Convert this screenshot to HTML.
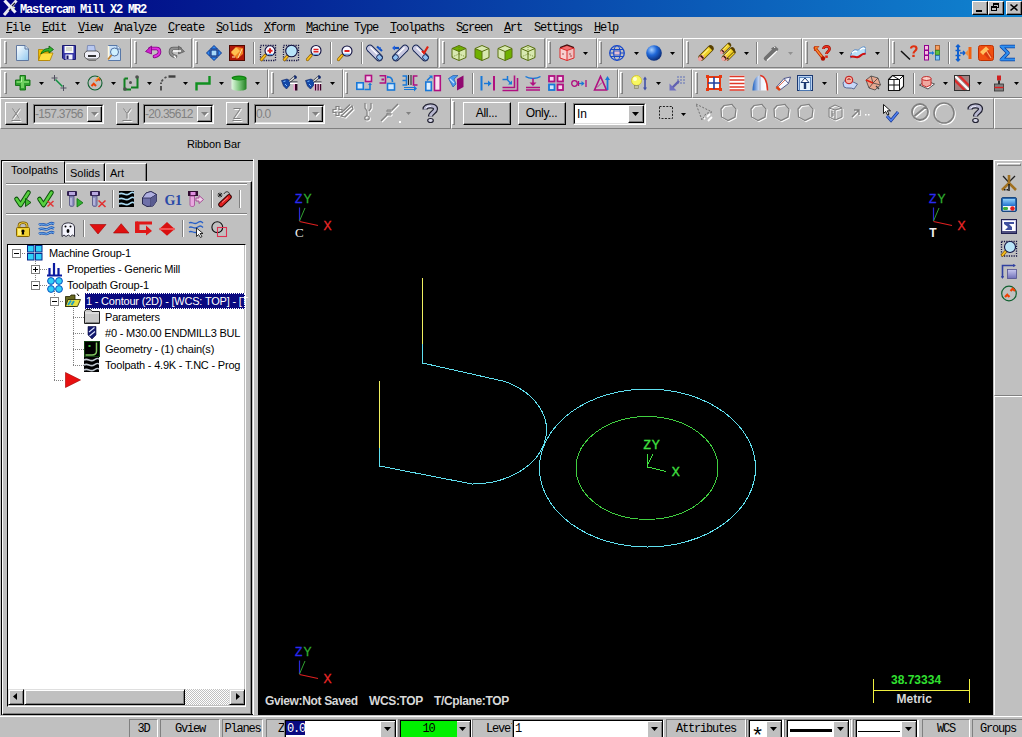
<!DOCTYPE html>
<html><head><meta charset="utf-8">
<style>
*{margin:0;padding:0;box-sizing:border-box}
html,body{width:1022px;height:737px;overflow:hidden;background:#c0c0c0;position:relative;font-family:"Liberation Sans",sans-serif;font-size:11px;color:#000}
.a{position:absolute;white-space:pre}
svg.a{overflow:visible}
.mono{font-family:"Liberation Mono",monospace;font-size:12px;letter-spacing:-1.2px;line-height:14px}
.u{text-decoration:underline}
</style></head><body>
<div class="a" style="left:0px;top:0px;width:1022px;height:17px;background:linear-gradient(90deg,#000080,#1084d0)"></div>
<svg class="a" style="left:2px;top:0px" width="17" height="16" viewBox="0 0 17 16"><path d="M2.5 0.5L13.5 12.5" stroke="#f0f0f8" stroke-width="3.2"/><path d="M14.5 0.5L2 15" stroke="#e8e8f0" stroke-width="3"/><path d="M13 3L10 6M9 9L7 11" stroke="#202030" stroke-width="1.2"/><path d="M11 7L13 8" stroke="#f0f0c0" stroke-width="1.5"/></svg>
<div class="a mono" style="left:20px;top:3px;color:#fff;font-weight:bold;">Mastercam Mill X2 MR2</div>
<div class="a" style="left:972px;top:1px;width:16px;height:14px;background:#c0c0c0;border-top:1px solid #fff;border-left:1px solid #fff;border-right:1px solid #000;border-bottom:1px solid #000;box-shadow:inset -1px -1px 0 #808080"></div>
<div class="a" style="left:976px;top:10px;width:6px;height:2px;background:#000"></div>
<div class="a" style="left:988px;top:1px;width:16px;height:14px;background:#c0c0c0;border-top:1px solid #fff;border-left:1px solid #fff;border-right:1px solid #000;border-bottom:1px solid #000;box-shadow:inset -1px -1px 0 #808080"></div>
<div class="a" style="left:993px;top:3px;width:6px;height:5px;border:1px solid #000;border-top-width:2px"></div>
<div class="a" style="left:991px;top:6px;width:6px;height:5px;border:1px solid #000;border-top-width:2px;background:#c0c0c0"></div>
<div class="a" style="left:1006px;top:1px;width:16px;height:14px;background:#c0c0c0;border-top:1px solid #fff;border-left:1px solid #fff;border-right:1px solid #000;border-bottom:1px solid #000;box-shadow:inset -1px -1px 0 #808080"></div>
<svg class="a" style="left:1010px;top:4px" width="8" height="7" viewBox="0 0 8 7"><path d="M0.5 0.5L7.5 6.5M7.5 0.5L0.5 6.5" stroke="#000" stroke-width="1.6"/></svg>
<div class="a mono" style="left:6px;top:21px;"><span class="u">F</span>ile</div>
<div class="a mono" style="left:42px;top:21px;"><span class="u">E</span>dit</div>
<div class="a mono" style="left:78px;top:21px;"><span class="u">V</span>iew</div>
<div class="a mono" style="left:114px;top:21px;"><span class="u">A</span>nalyze</div>
<div class="a mono" style="left:168px;top:21px;"><span class="u">C</span>reate</div>
<div class="a mono" style="left:216px;top:21px;"><span class="u">S</span>olids</div>
<div class="a mono" style="left:264px;top:21px;"><span class="u">X</span>form</div>
<div class="a mono" style="left:306px;top:21px;"><span class="u">M</span>achine Type</div>
<div class="a mono" style="left:390px;top:21px;"><span class="u">T</span>oolpaths</div>
<div class="a mono" style="left:456px;top:21px;">S<span class="u">c</span>reen</div>
<div class="a mono" style="left:504px;top:21px;"><span class="u">A</span>rt</div>
<div class="a mono" style="left:534px;top:21px;">Sett<span class="u">i</span>ngs</div>
<div class="a mono" style="left:594px;top:21px;"><span class="u">H</span>elp</div>
<div class="a" style="left:0px;top:38px;width:131px;height:30px;border-top:1px solid #fff;border-left:1px solid #fff;border-right:1px solid #808080;border-bottom:1px solid #808080"></div>
<div class="a" style="left:131px;top:38px;width:61px;height:30px;border-top:1px solid #fff;border-left:1px solid #fff;border-right:1px solid #808080;border-bottom:1px solid #808080"></div>
<div class="a" style="left:193px;top:38px;width:245px;height:30px;border-top:1px solid #fff;border-left:1px solid #fff;border-right:1px solid #808080;border-bottom:1px solid #808080"></div>
<div class="a" style="left:439px;top:38px;width:106px;height:30px;border-top:1px solid #fff;border-left:1px solid #fff;border-right:1px solid #808080;border-bottom:1px solid #808080"></div>
<div class="a" style="left:546px;top:38px;width:51px;height:30px;border-top:1px solid #fff;border-left:1px solid #fff;border-right:1px solid #808080;border-bottom:1px solid #808080"></div>
<div class="a" style="left:597px;top:38px;width:86px;height:30px;border-top:1px solid #fff;border-left:1px solid #fff;border-right:1px solid #808080;border-bottom:1px solid #808080"></div>
<div class="a" style="left:683px;top:38px;width:119px;height:30px;border-top:1px solid #fff;border-left:1px solid #fff;border-right:1px solid #808080;border-bottom:1px solid #808080"></div>
<div class="a" style="left:802px;top:38px;width:87px;height:30px;border-top:1px solid #fff;border-left:1px solid #fff;border-right:1px solid #808080;border-bottom:1px solid #808080"></div>
<div class="a" style="left:889px;top:38px;width:142px;height:30px;border-top:1px solid #fff;border-left:1px solid #fff;border-right:1px solid #808080;border-bottom:1px solid #808080"></div>
<div class="a" style="left:4px;top:41px;width:3px;height:23px;border-top:1px solid #fff;border-left:1px solid #fff;border-right:1px solid #808080;border-bottom:1px solid #808080"></div>
<div class="a" style="left:134px;top:41px;width:3px;height:23px;border-top:1px solid #fff;border-left:1px solid #fff;border-right:1px solid #808080;border-bottom:1px solid #808080"></div>
<div class="a" style="left:195px;top:41px;width:3px;height:23px;border-top:1px solid #fff;border-left:1px solid #fff;border-right:1px solid #808080;border-bottom:1px solid #808080"></div>
<div class="a" style="left:442px;top:41px;width:3px;height:23px;border-top:1px solid #fff;border-left:1px solid #fff;border-right:1px solid #808080;border-bottom:1px solid #808080"></div>
<div class="a" style="left:548px;top:41px;width:3px;height:23px;border-top:1px solid #fff;border-left:1px solid #fff;border-right:1px solid #808080;border-bottom:1px solid #808080"></div>
<div class="a" style="left:599px;top:41px;width:3px;height:23px;border-top:1px solid #fff;border-left:1px solid #fff;border-right:1px solid #808080;border-bottom:1px solid #808080"></div>
<div class="a" style="left:686px;top:41px;width:3px;height:23px;border-top:1px solid #fff;border-left:1px solid #fff;border-right:1px solid #808080;border-bottom:1px solid #808080"></div>
<div class="a" style="left:805px;top:41px;width:3px;height:23px;border-top:1px solid #fff;border-left:1px solid #fff;border-right:1px solid #808080;border-bottom:1px solid #808080"></div>
<div class="a" style="left:892px;top:41px;width:3px;height:23px;border-top:1px solid #fff;border-left:1px solid #fff;border-right:1px solid #808080;border-bottom:1px solid #808080"></div>
<svg class="a" style="left:14px;top:45px" width="16" height="16" viewBox="0 0 16 16"><defs><linearGradient id="gnew" x1="0" y1="0" x2="1" y2="1"><stop offset="0" stop-color="#ffffff"/><stop offset="1" stop-color="#90c8f0"/></linearGradient></defs><path d="M2.5 0.5H11L14.5 4V15.5H2.5Z" fill="url(#gnew)" stroke="#6078a0"/><path d="M11 0.5V4H14.5" fill="#d0e0f0" stroke="#6078a0"/></svg>
<svg class="a" style="left:38px;top:45px" width="16" height="16" viewBox="0 0 16 16"><path d="M0.5 4.5H5L6 5.5H12V8L10 15.5H0.5Z" fill="#f0c000" stroke="#b08000" stroke-width=".8"/><path d="M0.5 15.5L3 8H15L12 15.5Z" fill="#ffe040" stroke="#b08000" stroke-width=".8"/><path d="M3 9C4 5 7 3.5 11 3.5V1L15.5 4.5L11 8V6C8 6 5.5 7 3 9Z" fill="#30b030" stroke="#0a600a" stroke-width=".8"/></svg>
<svg class="a" style="left:61px;top:45px" width="16" height="16" viewBox="0 0 16 16"><path d="M1.5 0.5H14.5V14.5H3L1.5 13Z" fill="#3838a8" stroke="#1a1a70"/><rect x="3.5" y="1" width="9" height="7" fill="#fafafa"/><path d="M5 3H11M5 5H11" stroke="#a0a890" stroke-width=".8"/><rect x="4.5" y="9.5" width="7" height="5" fill="#f0f0ff"/><rect x="5.5" y="10.5" width="2" height="3.5" fill="#101060"/></svg>
<svg class="a" style="left:84px;top:45px" width="16" height="16" viewBox="0 0 16 16"><path d="M3.5 0.5H10.5L11.5 7H3Z" fill="#b8c8f0" stroke="#7080b0" stroke-width=".8"/><path d="M0.5 8L3 6H13L15.5 8V12L13 14H3L0.5 12Z" fill="#f0f0f8" stroke="#404040" stroke-width=".8"/><path d="M4 11H12" stroke="#000" stroke-width="1.6"/><path d="M3 14L5 15.5H12" stroke="#606060" stroke-width=".8" fill="none"/></svg>
<svg class="a" style="left:107px;top:45px" width="16" height="16" viewBox="0 0 16 16"><path d="M1.5 0.5H10L13.5 4V15.5H1.5Z" fill="#c8e0f8" stroke="#5878a8"/><path d="M10 0.5V4H13.5" fill="#e0f0ff" stroke="#5878a8"/><path d="M1.5 1V15" stroke="#fff8e0" stroke-width="1.5"/><circle cx="7.5" cy="7" r="4" fill="#d0f0ff" stroke="#5070a0"/><path d="M4.5 10L1 14.5" stroke="#c08030" stroke-width="1.8"/></svg>
<svg class="a" style="left:145px;top:45px" width="16" height="16" viewBox="0 0 16 16"><path d="M5 3.5H11.5C13.5 3.5 14.5 5 14.5 7C14.5 9 13 10.5 9.5 11.5" fill="none" stroke="#800080" stroke-width="3.6" stroke-linecap="round"/><path d="M5 3.5H11.5C13.5 3.5 14.5 5 14.5 7C14.5 9 13 10.5 9.5 11.5" fill="none" stroke="#e030e0" stroke-width="2" stroke-linecap="round"/><path d="M0.5 6.5L6.5 1V9Z" fill="#d020d0" stroke="#800080" stroke-width=".8"/></svg>
<svg class="a" style="left:169px;top:45px" width="16" height="16" viewBox="0 0 16 16"><g transform="translate(16 0) scale(-1 1)"><path d="M5 3.5H11.5C13.5 3.5 14.5 5 14.5 7C14.5 9 13 10.5 9.5 11.5" fill="none" stroke="#606060" stroke-width="3.6" stroke-linecap="round"/><path d="M5 3.5H11.5C13.5 3.5 14.5 5 14.5 7C14.5 9 13 10.5 9.5 11.5" fill="none" stroke="#909090" stroke-width="2" stroke-linecap="round"/><path d="M0.5 6.5L6.5 1V9Z" fill="#808080" stroke="#606060" stroke-width=".8"/></g><path d="M4 6H12M5 11L7 13" stroke="#fff" stroke-width="1.3"/></svg>
<svg class="a" style="left:206px;top:45px" width="16" height="16" viewBox="0 0 16 16"><path d="M8 0.5L11.5 4H4.5Z M8 15.5L11.5 12H4.5Z M0.5 8L4 4.5V11.5Z M15.5 8L12 4.5V11.5Z" fill="#3088f0" stroke="#0a3890" stroke-width="1" stroke-linejoin="round"/><rect x="5" y="5" width="6" height="6" fill="#a8d8f8" stroke="#0a3890" stroke-width="1.2"/></svg>
<svg class="a" style="left:229px;top:45px" width="16" height="16" viewBox="0 0 16 16"><rect x="0.5" y="0.5" width="15" height="15" fill="#b01808" stroke="#500800"/><path d="M2 8L8 2L14 3L14 9L8 14Z" fill="#f08020"/><path d="M2 7L7 2L11 6L6 11Z" fill="#ffc050"/><path d="M9 13L13 4" stroke="#ffe0a0" stroke-width="1"/><path d="M3 12H6" stroke="#ffd0a0" stroke-width="1.2"/></svg>
<svg class="a" style="left:260px;top:45px" width="16" height="16" viewBox="0 0 16 16"><rect x="0.5" y="0.5" width="15" height="15" fill="none" stroke="#101040" stroke-width="1.3" stroke-dasharray="1.2 1.2"/><path d="M5 10.5L1.5 14.5" stroke="#906000" stroke-width="3.2" stroke-linecap="round"/><path d="M5 10.5L1.5 14.5" stroke="#f8c020" stroke-width="1.8" stroke-linecap="round"/><circle cx="10" cy="5.8" r="5" fill="#f8f8ff" stroke="#101040" stroke-width="1.1"/><path d="M7.5 5.8H12.5M10 3.3V8.3" stroke="#e02020" stroke-width="2"/><path d="M7 9.5H13" stroke="#60a0e0" stroke-width="1.2"/></svg>
<svg class="a" style="left:283px;top:45px" width="16" height="16" viewBox="0 0 16 16"><rect x="0.5" y="0.5" width="15" height="15" fill="none" stroke="#101040" stroke-width="1.3" stroke-dasharray="1.2 1.2"/><path d="M5 10.5L1.5 14.5" stroke="#906000" stroke-width="3.2" stroke-linecap="round"/><path d="M5 10.5L1.5 14.5" stroke="#f8c020" stroke-width="1.8" stroke-linecap="round"/><circle cx="8.5" cy="6" r="5.8" fill="#b8e4f8" stroke="#101040" stroke-width="1.1"/></svg>
<svg class="a" style="left:306px;top:45px" width="16" height="16" viewBox="0 0 16 16"><path d="M5 10.5L1.5 14.5" stroke="#906000" stroke-width="3.2" stroke-linecap="round"/><path d="M5 10.5L1.5 14.5" stroke="#f8c020" stroke-width="1.8" stroke-linecap="round"/><circle cx="10" cy="5.5" r="5" fill="#f8f8ff" stroke="#101040" stroke-width="1.1"/><path d="M7.5 4.5H12.5M7.5 6.8H12.5" stroke="#e02020" stroke-width="1.4"/><path d="M7 9.3H13" stroke="#60a0e0" stroke-width="1.2"/></svg>
<svg class="a" style="left:337px;top:45px" width="16" height="16" viewBox="0 0 16 16"><path d="M5 10.5L1.5 14.5" stroke="#906000" stroke-width="3.2" stroke-linecap="round"/><path d="M5 10.5L1.5 14.5" stroke="#f8c020" stroke-width="1.8" stroke-linecap="round"/><circle cx="10" cy="6" r="5" fill="#f8f8ff" stroke="#101040" stroke-width="1.1"/><path d="M7.5 6H12.5" stroke="#e02020" stroke-width="2"/><path d="M7 9.3H13" stroke="#60a0e0" stroke-width="1.2"/></svg>
<svg class="a" style="left:368px;top:45px" width="16" height="16" viewBox="0 0 16 16"><path d="M2 3.5L11 12.5" stroke="#102050" stroke-width="7.5" stroke-linecap="round"/><path d="M2 3.5L11 12.5" stroke="#c8c8e0" stroke-width="5.8" stroke-linecap="round"/><path d="M2.5 2.5L9 9" stroke="#ffffff" stroke-width="1.2"/><ellipse cx="11.5" cy="12.5" rx="3" ry="2.6" transform="rotate(45 11.5 12.5)" fill="#90c0f0" stroke="#102050" stroke-width=".9"/><path d="M9 1.5L14 6" stroke="#1050c0" stroke-width="2.2"/><path d="M10 3L13 2L12 5Z" fill="#2060e0"/></svg>
<svg class="a" style="left:391px;top:45px" width="16" height="16" viewBox="0 0 16 16"><g transform="translate(16 0) scale(-1 1)"><path d="M2 3.5L11 12.5" stroke="#102050" stroke-width="7.5" stroke-linecap="round"/><path d="M2 3.5L11 12.5" stroke="#c8c8e0" stroke-width="5.8" stroke-linecap="round"/><path d="M2.5 2.5L9 9" stroke="#ffffff" stroke-width="1.2"/><ellipse cx="11.5" cy="12.5" rx="3" ry="2.6" transform="rotate(45 11.5 12.5)" fill="#90c0f0" stroke="#102050" stroke-width=".9"/></g><path d="M2 3H8" stroke="#1050c0" stroke-width="2.2"/><path d="M1 3L4 0.5V5.5Z" fill="#2060e0"/></svg>
<svg class="a" style="left:414px;top:45px" width="16" height="16" viewBox="0 0 16 16"><path d="M2 3.5L11 12.5" stroke="#102050" stroke-width="7.5" stroke-linecap="round"/><path d="M2 3.5L11 12.5" stroke="#c8c8e0" stroke-width="5.8" stroke-linecap="round"/><path d="M2.5 2.5L9 9" stroke="#ffffff" stroke-width="1.2"/><ellipse cx="11.5" cy="12.5" rx="3" ry="2.6" transform="rotate(45 11.5 12.5)" fill="#90c0f0" stroke="#102050" stroke-width=".9"/><path d="M8 6L10 8L14 1.5" stroke="#e02010" stroke-width="2.2" fill="none"/></svg>
<svg class="a" style="left:451px;top:45px" width="16" height="16" viewBox="0 0 16 16"><path d="M1 3.5L8 0.5L15 3.5L8 6.5Z" fill="#70b000"/><path d="M1 3.5L8 6.5V15.5L1 12.5Z" fill="#d8e8b0"/><path d="M15 3.5L8 6.5V15.5L15 12.5Z" fill="#d8e8b0"/><path d="M1 12L8 9L15 12M8 9V0.5" fill="none" stroke="#587010" stroke-width=".7" stroke-dasharray="1 1"/><path d="M1 3.5L8 0.5L15 3.5V12.5L8 15.5L1 12.5Z" fill="none" stroke="#587010" stroke-width="1"/><path d="M1 3.5L8 6.5L15 3.5M8 6.5V15.5" fill="none" stroke="#587010" stroke-width="1"/></svg>
<svg class="a" style="left:474px;top:45px" width="16" height="16" viewBox="0 0 16 16"><path d="M1 3.5L8 0.5L15 3.5L8 6.5Z" fill="#d8e8b0"/><path d="M1 3.5L8 6.5V15.5L1 12.5Z" fill="#70b000"/><path d="M15 3.5L8 6.5V15.5L15 12.5Z" fill="#d8e8b0"/><path d="M1 3.5L8 0.5L15 3.5V12.5L8 15.5L1 12.5Z" fill="none" stroke="#587010" stroke-width="1"/><path d="M1 3.5L8 6.5L15 3.5M8 6.5V15.5" fill="none" stroke="#587010" stroke-width="1"/></svg>
<svg class="a" style="left:497px;top:45px" width="16" height="16" viewBox="0 0 16 16"><path d="M1 3.5L8 0.5L15 3.5L8 6.5Z" fill="#d8e8b0"/><path d="M1 3.5L8 6.5V15.5L1 12.5Z" fill="#d8e8b0"/><path d="M15 3.5L8 6.5V15.5L15 12.5Z" fill="#70b000"/><path d="M1 3.5L8 0.5L15 3.5V12.5L8 15.5L1 12.5Z" fill="none" stroke="#587010" stroke-width="1"/><path d="M1 3.5L8 6.5L15 3.5M8 6.5V15.5" fill="none" stroke="#587010" stroke-width="1"/></svg>
<svg class="a" style="left:520px;top:45px" width="16" height="16" viewBox="0 0 16 16"><path d="M1 3.5L8 0.5L15 3.5L8 6.5Z" fill="#d8e8b0"/><path d="M1 3.5L8 6.5V15.5L1 12.5Z" fill="#d8e8b0"/><path d="M15 3.5L8 6.5V15.5L15 12.5Z" fill="#d8e8b0"/><path d="M1 12L8 9L15 12M8 9V0.5" fill="none" stroke="#587010" stroke-width=".7" stroke-dasharray="1 1"/><path d="M1 3.5L8 0.5L15 3.5V12.5L8 15.5L1 12.5Z" fill="none" stroke="#587010" stroke-width="1"/><path d="M1 3.5L8 6.5L15 3.5M8 6.5V15.5" fill="none" stroke="#587010" stroke-width="1"/></svg>
<svg class="a" style="left:559px;top:45px" width="16" height="16" viewBox="0 0 16 16"><path d="M1 3L8 0.5L15 3L8 5.5Z" fill="#f07070"/><path d="M1 3L8 5.5V15.5L1 13Z" fill="#f8d0d0"/><path d="M15 3L8 5.5V15.5L15 13Z" fill="#f0c0c0"/><path d="M1 3L8 0.5L15 3V13L8 15.5L1 13ZM1 3L8 5.5L15 3M8 5.5V15.5" fill="none" stroke="#e02828" stroke-width="1"/><path d="M1 2.5L8 0L15 2.5" stroke="#401010" stroke-width="1.2" fill="none"/><circle cx="4" cy="9" r=".7" fill="#802020"/><circle cx="11" cy="9" r=".7" fill="#802020"/><circle cx="12" cy="11" r=".7" fill="#802020"/></svg>
<svg class="a" style="left:609px;top:45px" width="16" height="16" viewBox="0 0 16 16"><circle cx="8" cy="8" r="7.3" fill="none" stroke="#1848c8" stroke-width="1.3"/><ellipse cx="8" cy="8" rx="3.3" ry="7.3" fill="none" stroke="#1848c8"/><path d="M1 8H15M2 4.5H14M2 11.5H14" stroke="#1848c8"/><rect x="5" y="6" width="6" height="4" fill="#e8c0d0" stroke="#1848c8" stroke-width=".8"/></svg>
<svg class="a" style="left:646px;top:45px" width="16" height="16" viewBox="0 0 16 16"><defs><radialGradient id="sg" cx=".35" cy=".3" r=".75"><stop offset="0" stop-color="#a8d0ff"/><stop offset=".45" stop-color="#2068d8"/><stop offset="1" stop-color="#0a2870"/></radialGradient></defs><circle cx="8" cy="8" r="7.8" fill="url(#sg)"/></svg>
<svg class="a" style="left:698px;top:45px" width="16" height="16" viewBox="0 0 16 16"><path d="M3.5 12.5L12.5 3.5" stroke="#584000" stroke-width="6.4" stroke-linecap="round"/><path d="M3.5 12.5L12.5 3.5" stroke="#f0d028" stroke-width="4.8"/><path d="M4 10.5L10.5 4" stroke="#fff080" stroke-width="1.2"/><path d="M2 14L4 12" stroke="#f0a0a0" stroke-width="4.4" stroke-linecap="round"/><path d="M2.5 10.5L5.5 13.5" stroke="#301000" stroke-width="1.6"/></svg>
<svg class="a" style="left:720px;top:45px" width="16" height="16" viewBox="0 0 16 16"><g transform="translate(0 -2.5) scale(.72)"><path d="M3.5 12.5L12.5 3.5" stroke="#584000" stroke-width="6.4" stroke-linecap="round"/><path d="M3.5 12.5L12.5 3.5" stroke="#f0d028" stroke-width="4.8"/><path d="M4 10.5L10.5 4" stroke="#fff080" stroke-width="1.2"/><path d="M2 14L4 12" stroke="#f0a0a0" stroke-width="4.4" stroke-linecap="round"/><path d="M2.5 10.5L5.5 13.5" stroke="#301000" stroke-width="1.6"/></g><g transform="translate(4.5 4.5) scale(.72)"><path d="M3.5 12.5L12.5 3.5" stroke="#584000" stroke-width="6.4" stroke-linecap="round"/><path d="M3.5 12.5L12.5 3.5" stroke="#f0d028" stroke-width="4.8"/><path d="M4 10.5L10.5 4" stroke="#fff080" stroke-width="1.2"/><path d="M2 14L4 12" stroke="#f0a0a0" stroke-width="4.4" stroke-linecap="round"/><path d="M2.5 10.5L5.5 13.5" stroke="#301000" stroke-width="1.6"/></g><g transform="translate(1.5 2) scale(.85)"><path d="M3.5 12.5L12.5 3.5" stroke="#584000" stroke-width="6.4" stroke-linecap="round"/><path d="M3.5 12.5L12.5 3.5" stroke="#f0d028" stroke-width="4.8"/><path d="M4 10.5L10.5 4" stroke="#fff080" stroke-width="1.2"/><path d="M2 14L4 12" stroke="#f0a0a0" stroke-width="4.4" stroke-linecap="round"/><path d="M2.5 10.5L5.5 13.5" stroke="#301000" stroke-width="1.6"/></g></svg>
<svg class="a" style="left:763px;top:45px" width="16" height="16" viewBox="0 0 16 16"><path d="M3 13.5L10 6.5" stroke="#707070" stroke-width="4.5" stroke-linecap="round"/><path d="M8 3.5L12 1L15.5 4L13 8Z" fill="#707070"/><path d="M11 1.5L12 3" stroke="#fff" stroke-width="1"/><path d="M4 15.5L14 6" stroke="#fff" stroke-width="1.2"/></svg>
<svg class="a" style="left:814px;top:45px" width="16" height="16" viewBox="0 0 16 16"><path d="M1 3L8.5 12.5" stroke="#c02000" stroke-width="3" stroke-linecap="round"/><path d="M1.5 3.5L8.5 12.5" stroke="#f89030" stroke-width="1.4"/><path d="M0.5 1.5H5L0.5 6Z" fill="#f08020" stroke="#c02000" stroke-width=".6"/><circle cx="9" cy="13.5" r="2.2" fill="#b01000"/><path d="M9.5 4C9.5 0.5 15.5 0.5 15.5 4C15.5 6.5 12.5 6.5 12.5 9" fill="none" stroke="#a01000" stroke-width="2.8"/><path d="M9.5 4C9.5 0.5 15.5 0.5 15.5 4C15.5 6.5 12.5 6.5 12.5 9" fill="none" stroke="#f03020" stroke-width="1.4"/><rect x="11.2" y="10.5" width="2.6" height="2.4" fill="#e02010"/></svg>
<svg class="a" style="left:850px;top:45px" width="16" height="16" viewBox="0 0 16 16"><path d="M0.5 11C2 6 4 4 7 5C9 6 11 1 15 2L15.5 9C13 8 11 11 9 12C6 13 4 10 0.5 13Z" fill="#b8e0f8" stroke="#3070c0" stroke-width=".7"/><path d="M2 8C4 6 6 6 7 7M10 5C12 3 14 3 15 4" stroke="#ffffff" stroke-width="1.2" fill="none"/><path d="M0.5 12C3 10 5 13 8 12C11 11 12 8 15.5 9" stroke="#d01010" stroke-width="2" fill="none"/></svg>
<svg class="a" style="left:902px;top:45px" width="16" height="16" viewBox="0 0 16 16"><path d="M-1 6L8 14.5" stroke="#101010" stroke-width="1.5"/><path d="M9 3.5C9 0.5 14.5 0.5 14.5 3.5C14.5 6 11.5 6 11.5 8.5" fill="none" stroke="#e03010" stroke-width="2.2"/><rect x="10.3" y="9.8" width="2.4" height="2.2" fill="#e03010"/></svg>
<svg class="a" style="left:924px;top:45px" width="16" height="16" viewBox="0 0 16 16"><rect x="0.5" y="0.5" width="4" height="4.5" fill="#f8c0e0" stroke="#900090"/><rect x="0.5" y="5.5" width="4" height="4.5" fill="#f8c0e0" stroke="#900090"/><rect x="0.5" y="10.5" width="4" height="4.5" fill="#f8c0e0" stroke="#900090"/><path d="M5 8H9" stroke="#1878e0" stroke-width="1.5"/><path d="M8 6L10.5 8L8 10Z" fill="#1878e0"/><rect x="11.5" y="0.5" width="4" height="4.5" fill="#f8a060" stroke="#a05020" stroke-width=".8"/><rect x="11.5" y="5.5" width="4" height="4.5" fill="#60c040" stroke="#308020" stroke-width=".8"/><rect x="11.5" y="10.5" width="4" height="4.5" fill="#80c8f8" stroke="#2060a0" stroke-width=".8"/></svg>
<svg class="a" style="left:955px;top:45px" width="16" height="16" viewBox="0 0 16 16"><path d="M3 1V15" stroke="#1060d0" stroke-width="2"/><path d="M1 2L3 0L5 2M1 14L3 16L5 14M0.5 5.5H5.5M0.5 10.5H5.5" stroke="#1060d0" stroke-width="1.5" fill="none"/><path d="M5 8H10M8 6L10 8L8 10" stroke="#1060d0" stroke-width="1.4" fill="none"/><path d="M15 2V14" stroke="#f06010" stroke-width="3"/><path d="M10 8L14 4V12Z" fill="#f09040"/></svg>
<svg class="a" style="left:978px;top:45px" width="16" height="16" viewBox="0 0 16 16"><rect x="0.5" y="0.5" width="15" height="15" rx="2" fill="#f05010" stroke="#c03000"/><path d="M2 7L8 1.5L11 4.5L5 10Z" fill="#ffc060"/><path d="M6 9L10 5L14.5 12L11 14.5Z" fill="#d83810"/><path d="M8.5 6L13 13" stroke="#ffb070" stroke-width="1.2"/></svg>
<svg class="a" style="left:1000px;top:45px" width="16" height="16" viewBox="0 0 16 16"><path d="M15 1.5H1.5L8 8L1.5 14.5H15" fill="none" stroke="#0a40a0" stroke-width="3.6" stroke-linejoin="round"/><path d="M15 1.5H1.5L8 8L1.5 14.5H15" fill="none" stroke="#3090f0" stroke-width="2"/></svg>
<div class="a" style="left:253px;top:42px;width:1px;height:22px;background:#808080"></div>
<div class="a" style="left:254px;top:42px;width:1px;height:22px;background:#fff"></div>
<div class="a" style="left:330px;top:42px;width:1px;height:22px;background:#808080"></div>
<div class="a" style="left:331px;top:42px;width:1px;height:22px;background:#fff"></div>
<div class="a" style="left:361px;top:42px;width:1px;height:22px;background:#808080"></div>
<div class="a" style="left:362px;top:42px;width:1px;height:22px;background:#fff"></div>
<div class="a" style="left:756px;top:42px;width:1px;height:22px;background:#808080"></div>
<div class="a" style="left:757px;top:42px;width:1px;height:22px;background:#fff"></div>
<div class="a" style="left:948px;top:42px;width:1px;height:22px;background:#808080"></div>
<div class="a" style="left:949px;top:42px;width:1px;height:22px;background:#fff"></div>
<svg class="a" style="left:583px;top:52px" width="5" height="3"><path d="M0 0H5L2.5 3Z" fill="#000"/></svg>
<svg class="a" style="left:634px;top:52px" width="5" height="3"><path d="M0 0H5L2.5 3Z" fill="#000"/></svg>
<svg class="a" style="left:670px;top:52px" width="5" height="3"><path d="M0 0H5L2.5 3Z" fill="#000"/></svg>
<svg class="a" style="left:744px;top:52px" width="5" height="3"><path d="M0 0H5L2.5 3Z" fill="#000"/></svg>
<svg class="a" style="left:839px;top:52px" width="5" height="3"><path d="M0 0H5L2.5 3Z" fill="#000"/></svg>
<svg class="a" style="left:875px;top:52px" width="5" height="3"><path d="M0 0H5L2.5 3Z" fill="#000"/></svg>
<svg class="a" style="left:788px;top:52px" width="5" height="3"><path d="M0 0H5L2.5 3Z" fill="#909090"/></svg>
<div class="a" style="left:0px;top:69px;width:268px;height:29px;border-top:1px solid #fff;border-left:1px solid #fff;border-right:1px solid #808080;border-bottom:1px solid #808080"></div>
<div class="a" style="left:268px;top:69px;width:75px;height:29px;border-top:1px solid #fff;border-left:1px solid #fff;border-right:1px solid #808080;border-bottom:1px solid #808080"></div>
<div class="a" style="left:343px;top:69px;width:275px;height:29px;border-top:1px solid #fff;border-left:1px solid #fff;border-right:1px solid #808080;border-bottom:1px solid #808080"></div>
<div class="a" style="left:618px;top:69px;width:74px;height:29px;border-top:1px solid #fff;border-left:1px solid #fff;border-right:1px solid #808080;border-bottom:1px solid #808080"></div>
<div class="a" style="left:692px;top:69px;width:339px;height:29px;border-top:1px solid #fff;border-left:1px solid #fff;border-right:1px solid #808080;border-bottom:1px solid #808080"></div>
<div class="a" style="left:4px;top:72px;width:3px;height:22px;border-top:1px solid #fff;border-left:1px solid #fff;border-right:1px solid #808080;border-bottom:1px solid #808080"></div>
<div class="a" style="left:271px;top:72px;width:3px;height:22px;border-top:1px solid #fff;border-left:1px solid #fff;border-right:1px solid #808080;border-bottom:1px solid #808080"></div>
<div class="a" style="left:345px;top:72px;width:3px;height:22px;border-top:1px solid #fff;border-left:1px solid #fff;border-right:1px solid #808080;border-bottom:1px solid #808080"></div>
<div class="a" style="left:620px;top:72px;width:3px;height:22px;border-top:1px solid #fff;border-left:1px solid #fff;border-right:1px solid #808080;border-bottom:1px solid #808080"></div>
<div class="a" style="left:695px;top:72px;width:3px;height:22px;border-top:1px solid #fff;border-left:1px solid #fff;border-right:1px solid #808080;border-bottom:1px solid #808080"></div>
<svg class="a" style="left:15px;top:75px" width="16" height="16" viewBox="0 0 16 16"><path d="M5 0.5H10.5V5H15V10.5H10.5V15H5V10.5H0.5V5H5Z" fill="#30a030" stroke="#107010" stroke-width=".9"/><path d="M6 1.5H9V6H14V8H9V13H6V8H1.5V6H6Z" fill="#70d060"/><path d="M6.5 2V7" stroke="#b0f0a0" stroke-width="1"/></svg>
<svg class="a" style="left:51px;top:75px" width="16" height="16" viewBox="0 0 16 16"><path d="M0.5 3H6.5M3.5 0V6M9.5 13H15.5M12.5 10V16" stroke="#505060" stroke-width="1"/><path d="M4.5 4.5L11.5 11.5" stroke="#109040" stroke-width="1.5"/></svg>
<svg class="a" style="left:87px;top:75px" width="16" height="16" viewBox="0 0 16 16"><circle cx="8" cy="8" r="7" fill="none" stroke="#106030" stroke-width="1.1"/><path d="M4.5 11L7 8.5M6 8L9 11M9 6L11.5 3.5M10.5 3L13 5.5" stroke="#f04000" stroke-width="2"/><path d="M8 6L12 2" stroke="#f8a030" stroke-width="1.2"/></svg>
<svg class="a" style="left:123px;top:75px" width="16" height="16" viewBox="0 0 16 16"><path d="M1.5 3.5V14.5H8M14.5 1.5V12.5H8" fill="none" stroke="#108020" stroke-width="2"/><path d="M1.5 3.5H5" stroke="#108020" stroke-width="2"/><circle cx="7.5" cy="7.5" r="1.5" fill="#505050"/><circle cx="2" cy="14" r="1.8" fill="#505050"/><circle cx="14" cy="2" r="1.8" fill="#505050"/></svg>
<svg class="a" style="left:159px;top:75px" width="16" height="16" viewBox="0 0 16 16"><path d="M2 15.5V11M2 9V7.5" stroke="#505050" stroke-width="2"/><path d="M2.5 6.5L4 4.5M5.5 3L7.5 2" stroke="#505050" stroke-width="1.8"/><path d="M9.5 1.5H16.5" stroke="#404040" stroke-width="2.4"/></svg>
<svg class="a" style="left:195px;top:75px" width="16" height="16" viewBox="0 0 16 16"><path d="M1.5 15.5V8.5H14.5V1" fill="none" stroke="#109020" stroke-width="2.4"/></svg>
<svg class="a" style="left:231px;top:75px" width="16" height="16" viewBox="0 0 16 16"><defs><linearGradient id="gcyl" x1="0" x2="1"><stop offset="0" stop-color="#e0f8e0"/><stop offset=".5" stop-color="#80c880"/><stop offset="1" stop-color="#208020"/></linearGradient></defs><path d="M0.5 3V13.5C0.5 16.5 15.5 16.5 15.5 13.5V3Z" fill="url(#gcyl)"/><ellipse cx="8" cy="3" rx="7.5" ry="2.6" fill="#108010"/><ellipse cx="8" cy="3.3" rx="6" ry="1.6" fill="#20a020"/></svg>
<svg class="a" style="left:281px;top:75px" width="16" height="16" viewBox="0 0 16 16"><path d="M0.5 5.5L6 4L9.5 6L8.5 10.5L5.5 14L2.5 11Z" fill="#1448a8" stroke="#0a2060" stroke-width=".6"/><path d="M2.5 6.5L4.5 6M4 9L6 11" stroke="#80c0ff" stroke-width="1"/><path d="M8.5 6.5L15 1" stroke="#303840" stroke-width="2.6"/><path d="M8.5 6.5L15 1" stroke="#f0f0f0" stroke-width="1.2"/><path d="M13 0.5C15 0 16.5 1.5 15.5 3.5L13.5 4" fill="#102870"/><path d="M9 7H16.5" stroke="#202030" stroke-width="1"/><path d="M9 8.3H16.5" stroke="#fff" stroke-width="1.4"/><rect x="14" y="9" width="2.4" height="6.5" fill="#300020"/><rect x="12.5" y="9" width="1.5" height="6.5" fill="#f0a0d0"/></svg>
<svg class="a" style="left:305px;top:75px" width="16" height="16" viewBox="0 0 16 16"><path d="M0.5 5.5L6 4L9.5 6L8.5 10.5L5.5 14L2.5 11Z" fill="#1448a8" stroke="#0a2060" stroke-width=".6"/><path d="M2.5 6.5L4.5 6M4 9L6 11" stroke="#80c0ff" stroke-width="1"/><path d="M8.5 6.5L15 1" stroke="#303840" stroke-width="2.6"/><path d="M8.5 6.5L15 1" stroke="#f0f0f0" stroke-width="1.2"/><path d="M13 0.5C15 0 16.5 1.5 15.5 3.5L13.5 4" fill="#102870"/><path d="M9 7H16.5" stroke="#202030" stroke-width="1"/><path d="M9 8.3H16.5" stroke="#fff" stroke-width="1.4"/><path d="M10.5 9V15.5M13 9V15.5M15.5 9V15.5" stroke="#400028" stroke-width="1.4"/><path d="M9.5 9V15.5M12 9V15.5M14.5 9V15.5" stroke="#f0a0d0" stroke-width=".8"/></svg>
<svg class="a" style="left:356px;top:75px" width="16" height="16" viewBox="0 0 16 16"><rect x="9.5" y="0.5" width="6" height="6" fill="#f8d0f0" stroke="#b01080" stroke-width="1.6"/><rect x="0.8" y="7.8" width="6.5" height="6.5" fill="#d0e8ff" stroke="#1878d8" stroke-width="1.6"/><path d="M8.5 14.5H14V9" fill="none" stroke="#1878d8" stroke-width="1.6"/><path d="M12 10L14 7.5L16 10Z" fill="#1878d8"/></svg>
<svg class="a" style="left:379px;top:75px" width="16" height="16" viewBox="0 0 16 16"><path d="M0.5 0.8H6.5V8H0.5" fill="none" stroke="#b01080" stroke-width="1.6"/><path d="M2.5 3.5H5V5.5H2.5Z" fill="#b01080"/><rect x="8.5" y="8.5" width="7" height="6.5" fill="#d0e8ff" stroke="#1878d8" stroke-width="1.6"/><path d="M9 2C12 2 13.5 4 13.5 7" stroke="#1878d8" stroke-width="1.6" fill="none"/><path d="M8 0.5L10 2L8 3.5Z" fill="#1878d8"/></svg>
<svg class="a" style="left:402px;top:75px" width="16" height="16" viewBox="0 0 16 16"><path d="M0.5 1H4.5V10H0.5M0.5 5.5H4.5" fill="none" stroke="#1878d8" stroke-width="1.6"/><path d="M15.5 1H11.5V10H15.5" fill="none" stroke="#b01080" stroke-width="1.6"/><path d="M6.5 0V10M9 0V10" stroke="#202020" stroke-width="1"/><path d="M2 12.5H13M2 14.5H13" stroke="#1878d8" stroke-width="1"/><path d="M12 10.5L15 13.5L12 16.5Z" fill="#1878d8"/></svg>
<svg class="a" style="left:425px;top:75px" width="16" height="16" viewBox="0 0 16 16"><rect x="0.8" y="7" width="5.5" height="8.5" fill="#e0f0ff" stroke="#1878d8" stroke-width="1.6"/><rect x="9.5" y="0.8" width="5.8" height="14.7" fill="#f8e0f0" stroke="#b01080" stroke-width="1.6"/><path d="M2 5.5L6 1.5" stroke="#1878d8" stroke-width="1.6"/><path d="M4 0.5H7.5V4Z" fill="#1878d8"/></svg>
<svg class="a" style="left:448px;top:75px" width="16" height="16" viewBox="0 0 16 16"><path d="M0.5 3.5L5 0.5H10L6 4L8 9L5 12Z" fill="#4898f0" stroke="#1050a0" stroke-width=".6"/><path d="M2 4L6 8" stroke="#c0e0ff" stroke-width="1.2"/><path d="M9 4L15.5 0.5V12L9 15.5Z" fill="#900870"/></svg>
<svg class="a" style="left:480px;top:75px" width="16" height="16" viewBox="0 0 16 16"><path d="M1.5 1V15.5" stroke="#1878d8" stroke-width="2"/><path d="M14 1V15.5" stroke="#b01080" stroke-width="2"/><path d="M4 8.5H10" stroke="#1878d8" stroke-width="1.4"/><path d="M8 5.5L11.5 8.5L8 11.5Z" fill="#1878d8"/></svg>
<svg class="a" style="left:502px;top:75px" width="16" height="16" viewBox="0 0 16 16"><path d="M0.5 12.5H12.5V0.5" fill="none" stroke="#b01080" stroke-width="1.6"/><path d="M0.5 15.5H15.5V3" fill="none" stroke="#b01080" stroke-width="1.6"/><path d="M5.5 5L9 8.5" stroke="#1878d8" stroke-width="1.5"/><path d="M6 9.5H10V5.5Z" fill="#1878d8"/><path d="M0.5 4.5H5.5V1" fill="none" stroke="#1878d8" stroke-width="1.5"/></svg>
<svg class="a" style="left:525px;top:75px" width="16" height="16" viewBox="0 0 16 16"><path d="M0.5 1.5C4 4 12 4 15.5 1.5" stroke="#1878d8" stroke-width="1.5" fill="none"/><path d="M8 3.5V8" stroke="#b01080" stroke-width="1.5"/><path d="M4.5 7.5H11.5L8 11Z" fill="#b01080"/><path d="M1 12.5H15M1 15H15" stroke="#b01080" stroke-width="1.5"/></svg>
<svg class="a" style="left:548px;top:75px" width="16" height="16" viewBox="0 0 16 16"><rect x="1" y="1" width="5.5" height="5.5" fill="#f8d8f0" stroke="#b01080" stroke-width="1.8"/><rect x="9.5" y="1" width="5.5" height="5.5" fill="#f8d8f0" stroke="#b01080" stroke-width="1.8"/><rect x="1" y="9.5" width="5.5" height="5.5" fill="#d0e8ff" stroke="#1878d8" stroke-width="1.8"/><rect x="9.5" y="9.5" width="5.5" height="5.5" fill="#f8d8f0" stroke="#b01080" stroke-width="1.8"/></svg>
<svg class="a" style="left:571px;top:75px" width="16" height="16" viewBox="0 0 16 16"><circle cx="3.5" cy="8.5" r="2.8" fill="none" stroke="#b01080" stroke-width="1.3"/><path d="M7 8.5H13" stroke="#1878d8" stroke-width="1.3"/><path d="M10.5 6L13.5 8.5L10.5 11Z" fill="#1878d8"/><path d="M15 5V12M7.5 6V11" stroke="#b01080" stroke-width="1.3"/></svg>
<svg class="a" style="left:594px;top:75px" width="16" height="16" viewBox="0 0 16 16"><path d="M0.5 15L6.5 1.5L12.5 15Z" fill="none" stroke="#b01080" stroke-width="1.6"/><path d="M3 12.5L8 7.5" stroke="#b01080" stroke-width=".8"/><path d="M13.5 15V4" stroke="#1878d8" stroke-width="1.8"/><path d="M11 5L13.5 1L16 5Z" fill="#1878d8"/></svg>
<svg class="a" style="left:631px;top:75px" width="16" height="16" viewBox="0 0 16 16"><circle cx="5.5" cy="5.5" r="5" fill="#f8f860" stroke="#d0c020" stroke-width=".8"/><circle cx="4" cy="4" r="2" fill="#ffffd0"/><rect x="3.5" y="10.5" width="4" height="3" fill="#c0c0a0" stroke="#808060" stroke-width=".6"/><path d="M14 3V14" stroke="#4050a8" stroke-width="1.6"/><path d="M12 4.5L14 1.5L16 4.5ZM12 12.5L14 15.5L16 12.5Z" fill="#4050a8"/></svg>
<svg class="a" style="left:669px;top:75px" width="16" height="16" viewBox="0 0 16 16"><path d="M8 2H16M8 5H16M8 8H16" stroke="#6070b8" stroke-width="1" stroke-dasharray="2 1"/><path d="M2 14L10 6" stroke="#6060b0" stroke-width="2.4"/><path d="M0.5 8.5V15.5H7.5Z" fill="#7070c0"/></svg>
<svg class="a" style="left:706px;top:75px" width="16" height="16" viewBox="0 0 16 16"><rect x="2" y="2" width="12" height="12" fill="#fff" stroke="#e83810" stroke-width="2"/><path d="M8 2V14M2 8H14" stroke="#2040a0" stroke-width="1.6"/><rect x="0" y="0" width="3" height="3" fill="#e83810"/><rect x="13" y="0" width="3" height="3" fill="#e83810"/><rect x="0" y="13" width="3" height="3" fill="#e83810"/><rect x="13" y="13" width="3" height="3" fill="#e83810"/></svg>
<svg class="a" style="left:729px;top:75px" width="16" height="16" viewBox="0 0 16 16"><rect x="0.5" y="0.5" width="15" height="15" fill="#fff"/><path d="M0.5 1.5H15.5M0.5 5H15.5M0.5 8.5H15.5M0.5 12H15.5M0.5 15H15.5" stroke="#e03828" stroke-width="1.6"/></svg>
<svg class="a" style="left:752px;top:75px" width="16" height="16" viewBox="0 0 16 16"><defs><linearGradient id="garch" x1="0" x2="1"><stop offset="0" stop-color="#2060c0"/><stop offset=".5" stop-color="#e8f0ff"/><stop offset="1" stop-color="#ffffff"/></linearGradient></defs><path d="M0.5 15.5C0.5 6 4 0.5 8 0.5C12 0.5 15.5 6 15.5 15.5Z" fill="url(#garch)"/><path d="M8 0.5C12 0.5 15.5 6 15.5 15.5" fill="none" stroke="#e03020" stroke-width="1.5"/><path d="M8 0.5V15.5" stroke="#a0a0b0" stroke-width="1"/></svg>
<svg class="a" style="left:775px;top:75px" width="16" height="16" viewBox="0 0 16 16"><path d="M1.5 12L9 3.5L15.5 2L13.5 8.5L5 15Z" fill="#f8f8ff" stroke="#404880" stroke-width=".9"/><path d="M1.5 12L5 15" stroke="#e04010" stroke-width="2.6"/><path d="M9 3.5L13.5 8.5" stroke="#404880" stroke-width=".9"/><path d="M3 12L10 5" stroke="#e07050" stroke-width="1"/></svg>
<svg class="a" style="left:797px;top:75px" width="16" height="16" viewBox="0 0 16 16"><rect x="0.5" y="0.5" width="15" height="15" fill="#b8d0f0" stroke="#1a3870"/><rect x="2.5" y="2.5" width="11" height="13" fill="#e8f4ff" stroke="#4070b0" stroke-width=".8"/><path d="M8 14V6" stroke="#1a3870" stroke-width="2.4"/><path d="M4 7.5L8 3L12 7.5Z" fill="#fff" stroke="#1a3870" stroke-width="1"/></svg>
<svg class="a" style="left:842px;top:75px" width="16" height="16" viewBox="0 0 16 16"><path d="M1 8C3 4 7 4 9 6L15.5 9L12 14C9 12 5 14 2 12Z" fill="#c8d8f8" stroke="#405080" stroke-width=".8"/><circle cx="7" cy="5" r="3.8" fill="#f8b0a0" stroke="#c01010" stroke-width="1"/><path d="M5.5 5L7 3.5L8.5 5" stroke="#800000" stroke-width="1" fill="none"/></svg>
<svg class="a" style="left:865px;top:75px" width="16" height="16" viewBox="0 0 16 16"><path d="M1 5L6 1L13 3L15.5 10L10 15L4 13Z" fill="#e8a890" stroke="#404040" stroke-width=".8"/><path d="M6 1L8 8L13 3M8 8L4 13M8 8L15.5 10" stroke="#404040" stroke-width=".8" fill="none"/><path d="M1 5L8 8" stroke="#e02010" stroke-width="1.6"/><path d="M11 11L14 14" stroke="#404040" stroke-width="1.2"/></svg>
<svg class="a" style="left:888px;top:75px" width="16" height="16" viewBox="0 0 16 16"><path d="M0.5 4.5L4.5 0.5H15.5V11.5L11.5 15.5H0.5Z" fill="#fff" stroke="#101010" stroke-width="1.1"/><path d="M0.5 4.5H11.5V15.5M11.5 4.5L15.5 0.5M6 4.5V15.5M0.5 10H11.5M4.5 0.5L11 4.5" stroke="#101010" fill="none" stroke-width="1"/></svg>
<svg class="a" style="left:919px;top:75px" width="16" height="16" viewBox="0 0 16 16"><path d="M0.5 10L7 6L15.5 9L9 14Z" fill="#ffffff" stroke="#303030" stroke-width=".8"/><path d="M3 3.5H12V10L7.5 12L3 10Z" fill="#f0a8a0" stroke="#c01818" stroke-width=".9"/><ellipse cx="7.5" cy="3.5" rx="4.5" ry="2" fill="#f8d0c8" stroke="#c01818" stroke-width=".9"/></svg>
<svg class="a" style="left:954px;top:75px" width="16" height="16" viewBox="0 0 16 16"><rect x="0.5" y="0.5" width="15" height="15" fill="#a08080" stroke="#303030"/><path d="M0.5 5L11 15.5M5 0.5L15.5 11" stroke="#e02828" stroke-width="2.2"/><path d="M1 1L15 15" stroke="#f8f8f8" stroke-width="2.4"/><rect x="0.5" y="0.5" width="15" height="15" fill="none" stroke="#303030" stroke-width="1"/></svg>
<svg class="a" style="left:993px;top:75px" width="16" height="16" viewBox="0 0 16 16"><rect x="4" y="0.5" width="4" height="5" fill="#d02020"/><path d="M6 5.5V9" stroke="#303030" stroke-width="2"/><rect x="1.5" y="9" width="9" height="7" fill="#808080" stroke="#303030" stroke-width=".8"/><path d="M1.5 12.5H10.5" stroke="#e02020" stroke-width="1.4"/></svg>
<div class="a" style="left:472px;top:73px;width:1px;height:21px;background:#808080"></div>
<div class="a" style="left:473px;top:73px;width:1px;height:21px;background:#fff"></div>
<div class="a" style="left:836px;top:73px;width:1px;height:21px;background:#808080"></div>
<div class="a" style="left:837px;top:73px;width:1px;height:21px;background:#fff"></div>
<div class="a" style="left:913px;top:73px;width:1px;height:21px;background:#808080"></div>
<div class="a" style="left:914px;top:73px;width:1px;height:21px;background:#fff"></div>
<svg class="a" style="left:39px;top:82px" width="5" height="3"><path d="M0 0H5L2.5 3Z" fill="#000"/></svg>
<svg class="a" style="left:75px;top:82px" width="5" height="3"><path d="M0 0H5L2.5 3Z" fill="#000"/></svg>
<svg class="a" style="left:111px;top:82px" width="5" height="3"><path d="M0 0H5L2.5 3Z" fill="#000"/></svg>
<svg class="a" style="left:147px;top:82px" width="5" height="3"><path d="M0 0H5L2.5 3Z" fill="#000"/></svg>
<svg class="a" style="left:183px;top:82px" width="5" height="3"><path d="M0 0H5L2.5 3Z" fill="#000"/></svg>
<svg class="a" style="left:219px;top:82px" width="5" height="3"><path d="M0 0H5L2.5 3Z" fill="#000"/></svg>
<svg class="a" style="left:255px;top:82px" width="5" height="3"><path d="M0 0H5L2.5 3Z" fill="#000"/></svg>
<svg class="a" style="left:330px;top:82px" width="5" height="3"><path d="M0 0H5L2.5 3Z" fill="#000"/></svg>
<svg class="a" style="left:656px;top:82px" width="5" height="3"><path d="M0 0H5L2.5 3Z" fill="#000"/></svg>
<svg class="a" style="left:822px;top:82px" width="5" height="3"><path d="M0 0H5L2.5 3Z" fill="#000"/></svg>
<svg class="a" style="left:943px;top:82px" width="5" height="3"><path d="M0 0H5L2.5 3Z" fill="#000"/></svg>
<svg class="a" style="left:977px;top:82px" width="5" height="3"><path d="M0 0H5L2.5 3Z" fill="#000"/></svg>
<svg class="a" style="left:1014px;top:82px" width="5" height="3"><path d="M0 0H5L2.5 3Z" fill="#000"/></svg>
<div class="a" style="left:0px;top:98px;width:451px;height:31px;border-top:1px solid #fff;border-left:1px solid #fff;border-right:1px solid #808080;border-bottom:1px solid #808080"></div>
<div class="a" style="left:451px;top:98px;width:543px;height:31px;border-top:1px solid #fff;border-left:1px solid #fff;border-right:1px solid #808080;border-bottom:1px solid #808080"></div>
<div class="a" style="left:994px;top:98px;width:37px;height:31px;border-top:1px solid #fff;border-left:1px solid #fff;border-right:1px solid #808080;border-bottom:1px solid #808080"></div>
<div class="a" style="left:452px;top:101px;width:3px;height:24px;border-top:1px solid #fff;border-left:1px solid #fff;border-right:1px solid #808080;border-bottom:1px solid #808080"></div>
<div class="a" style="left:5px;top:102px;width:23px;height:23px;border-top:1px solid #fff;border-left:1px solid #fff;border-right:1px solid #000;border-bottom:1px solid #000;box-shadow:inset -1px -1px 0 #808080"></div>
<svg class="a" style="left:5px;top:102px" width="23" height="23"><path d="M7.5 6.5L14.5 16.5M14.5 6.5L7.5 16.5 M6.5 18.5H15.5" stroke="#fff" fill="none" transform="translate(1 1)"/><path d="M7.5 6.5L14.5 16.5M14.5 6.5L7.5 16.5 M6.5 18.5H15.5" stroke="#808080" fill="none"/></svg>
<div class="a" style="left:33px;top:104px;width:71px;height:20px;border-top:1px solid #808080;border-left:1px solid #808080;border-right:1px solid #fff;border-bottom:1px solid #fff"></div>
<div class="a" style="left:34px;top:105px;width:69px;height:18px;border-top:1px solid #000;border-left:1px solid #000;border-right:1px solid #dfdfdf;border-bottom:1px solid #dfdfdf"></div>
<div class="a " style="left:35px;top:107px;color:#808080;font-size:12px;letter-spacing:-0.7px">-157.3756</div>
<div class="a" style="left:87px;top:106px;width:15px;height:16px;border-top:1px solid #fff;border-left:1px solid #fff;border-right:1px solid #000;border-bottom:1px solid #000;box-shadow:inset -1px -1px 0 #808080"></div>
<svg class="a" style="left:91px;top:112px" width="9" height="6"><path d="M1 1H8L4.5 5Z" fill="#fff"/><path d="M0 0H7L3.5 4Z" fill="#808080"/></svg>
<div class="a" style="left:116px;top:102px;width:23px;height:23px;border-top:1px solid #fff;border-left:1px solid #fff;border-right:1px solid #000;border-bottom:1px solid #000;box-shadow:inset -1px -1px 0 #808080"></div>
<svg class="a" style="left:116px;top:102px" width="23" height="23"><path d="M7.5 6.5L11 11.5L14.5 6.5M11 11.5V16.5 M6.5 18.5H15.5" stroke="#fff" fill="none" transform="translate(1 1)"/><path d="M7.5 6.5L11 11.5L14.5 6.5M11 11.5V16.5 M6.5 18.5H15.5" stroke="#808080" fill="none"/></svg>
<div class="a" style="left:143px;top:104px;width:71px;height:20px;border-top:1px solid #808080;border-left:1px solid #808080;border-right:1px solid #fff;border-bottom:1px solid #fff"></div>
<div class="a" style="left:144px;top:105px;width:69px;height:18px;border-top:1px solid #000;border-left:1px solid #000;border-right:1px solid #dfdfdf;border-bottom:1px solid #dfdfdf"></div>
<div class="a " style="left:145px;top:107px;color:#808080;font-size:12px;letter-spacing:-0.7px">-20.35612</div>
<div class="a" style="left:197px;top:106px;width:15px;height:16px;border-top:1px solid #fff;border-left:1px solid #fff;border-right:1px solid #000;border-bottom:1px solid #000;box-shadow:inset -1px -1px 0 #808080"></div>
<svg class="a" style="left:201px;top:112px" width="9" height="6"><path d="M1 1H8L4.5 5Z" fill="#fff"/><path d="M0 0H7L3.5 4Z" fill="#808080"/></svg>
<div class="a" style="left:226px;top:102px;width:23px;height:23px;border-top:1px solid #fff;border-left:1px solid #fff;border-right:1px solid #000;border-bottom:1px solid #000;box-shadow:inset -1px -1px 0 #808080"></div>
<svg class="a" style="left:226px;top:102px" width="23" height="23"><path d="M7.5 6.5H14.5L7.5 16.5H14.5 M6.5 18.5H15.5" stroke="#fff" fill="none" transform="translate(1 1)"/><path d="M7.5 6.5H14.5L7.5 16.5H14.5 M6.5 18.5H15.5" stroke="#808080" fill="none"/></svg>
<div class="a" style="left:254px;top:104px;width:71px;height:20px;border-top:1px solid #808080;border-left:1px solid #808080;border-right:1px solid #fff;border-bottom:1px solid #fff"></div>
<div class="a" style="left:255px;top:105px;width:69px;height:18px;border-top:1px solid #000;border-left:1px solid #000;border-right:1px solid #dfdfdf;border-bottom:1px solid #dfdfdf"></div>
<div class="a " style="left:256px;top:107px;color:#808080;font-size:12px;letter-spacing:-0.7px">0.0</div>
<div class="a" style="left:308px;top:106px;width:15px;height:16px;border-top:1px solid #fff;border-left:1px solid #fff;border-right:1px solid #000;border-bottom:1px solid #000;box-shadow:inset -1px -1px 0 #808080"></div>
<svg class="a" style="left:312px;top:112px" width="9" height="6"><path d="M1 1H8L4.5 5Z" fill="#fff"/><path d="M0 0H7L3.5 4Z" fill="#808080"/></svg>
<svg class="a" style="left:333px;top:104px" width="22" height="19" viewBox="0 0 22 19"><path d="M3 2.5H6V5.5H9V8.5H6V11.5H3V8.5H0V5.5H3Z" fill="none" stroke="#ffffff" stroke-width="1.2" transform="translate(1 1)"/><path d="M3 2.5H6V5.5H9V8.5H6V11.5H3V8.5H0V5.5H3Z" fill="none" stroke="#808080" stroke-width="1.2"/><path d="M8 12L16 4.5L19 2L20 5L12 13Z M9 8L17 0.5" fill="none" stroke="#ffffff" stroke-width="1.2" transform="translate(1 1)"/><path d="M8 12L16 4.5L19 2L20 5L12 13Z M9 8L17 0.5" fill="none" stroke="#808080" stroke-width="1.2"/></svg>
<svg class="a" style="left:362px;top:103px" width="12" height="20" viewBox="0 0 12 20"><path d="M3 0V5L5 8V13M9 0V5L7 8" fill="none" stroke="#ffffff" stroke-width="1.2" transform="translate(1 1)"/><path d="M3 0V5L5 8V13M9 0V5L7 8" fill="none" stroke="#808080" stroke-width="1.2"/><path d="M5 13C2 13 2 17 5 17C8 17 8 13 5 13Z" fill="none" stroke="#ffffff" stroke-width="1.2" transform="translate(1 1)"/><path d="M5 13C2 13 2 17 5 17C8 17 8 13 5 13Z" fill="none" stroke="#808080" stroke-width="1.2"/></svg>
<svg class="a" style="left:380px;top:103px" width="22" height="20" viewBox="0 0 22 20"><path d="M1 18L18 1" fill="none" stroke="#ffffff" stroke-width="1.4" transform="translate(1 1)"/><path d="M1 18L18 1" fill="none" stroke="#808080" stroke-width="1.4"/><path d="M6 8L12 8M6 11H12M8 6V13M10 6V13" fill="none" stroke="#ffffff" stroke-width="1" transform="translate(1 1)"/><path d="M6 8L12 8M6 11H12M8 6V13M10 6V13" fill="none" stroke="#808080" stroke-width="1"/><rect x="19" y="18" width="2" height="2" fill="#fff"/></svg>
<svg class="a" style="left:422px;top:104px" width="16" height="19" viewBox="0 0 16 19"><path d="M3 5.5C3 0.8 13.5 0.5 13.5 5C13.5 8.5 8.5 8.5 8.5 12.5" fill="none" stroke="#202030" stroke-width="5.2"/><path d="M3 5.5C3 0.8 13.5 0.5 13.5 5C13.5 8.5 8.5 8.5 8.5 12.5" fill="none" stroke="#b8b8d0" stroke-width="2.8"/><path d="M4 4C5 2 8 2 9 2.5" fill="none" stroke="#f0f0ff" stroke-width="1"/><ellipse cx="8.5" cy="16.5" rx="2.8" ry="2" fill="#d8d8e8" stroke="#202030" stroke-width="1.2"/></svg>
<svg class="a" style="left:406px;top:112px" width="5" height="3"><path d="M0 0H5L2.5 3Z" fill="#808080"/></svg>
<div class="a" style="left:463px;top:102px;width:48px;height:23px;border-top:1px solid #fff;border-left:1px solid #fff;border-right:1px solid #000;border-bottom:1px solid #000;box-shadow:inset -1px -1px 0 #808080"></div>
<div class="a" style="left:463px;top:106px;width:47px;text-align:center;font-size:12px;letter-spacing:-0.3px">All...</div>
<div class="a" style="left:518px;top:102px;width:48px;height:23px;border-top:1px solid #fff;border-left:1px solid #fff;border-right:1px solid #000;border-bottom:1px solid #000;box-shadow:inset -1px -1px 0 #808080"></div>
<div class="a" style="left:518px;top:106px;width:47px;text-align:center;font-size:12px;letter-spacing:-0.3px">Only...</div>
<div class="a" style="left:573px;top:103px;width:73px;height:22px;border-top:1px solid #808080;border-left:1px solid #808080;border-right:1px solid #fff;border-bottom:1px solid #fff"></div>
<div class="a" style="left:574px;top:104px;width:71px;height:20px;border-top:1px solid #000;border-left:1px solid #000;border-right:1px solid #dfdfdf;border-bottom:1px solid #dfdfdf;background:#fff"></div>
<div class="a " style="left:577px;top:107px;font-size:12px">In</div>
<div class="a" style="left:628px;top:105px;width:16px;height:18px;background:#c0c0c0;border-top:1px solid #fff;border-left:1px solid #fff;border-right:1px solid #000;border-bottom:1px solid #000;box-shadow:inset -1px -1px 0 #808080"></div>
<svg class="a" style="left:632px;top:112px" width="7" height="4"><path d="M0 0H7L3.5 4Z" fill="#000"/></svg>
<svg class="a" style="left:658px;top:105px" width="16" height="16" viewBox="0 0 16 16"><rect x="1.5" y="1.5" width="13" height="12" fill="none" stroke="#202020" stroke-width="1" stroke-dasharray="2 1.4"/></svg>
<svg class="a" style="left:681px;top:113px" width="5" height="3"><path d="M0 0H5L2.5 3Z" fill="#000"/></svg>
<svg class="a" style="left:695px;top:103px" width="20" height="20" viewBox="0 0 20 20"><path d="M1 1L17 9L11 10.5L7 17Z" fill="none" stroke="#707070" stroke-width="1" stroke-dasharray="2 1.5"/><path d="M15 11L12 14M10 15L9 16M17 14L13 18" stroke="#fff" stroke-width="1.8"/></svg>
<svg class="a" style="left:720px;top:104px" width="18" height="18" viewBox="0 0 18 18"><path d="M4 1.5L12 0.5L16 5L15 13L8 16.5L1.5 13L1 5Z" fill="none" stroke="#ffffff" stroke-width="1.2" transform="translate(1 1)"/><path d="M4 1.5L12 0.5L16 5L15 13L8 16.5L1.5 13L1 5Z" fill="none" stroke="#808080" stroke-width="1.2"/></svg>
<svg class="a" style="left:750px;top:104px" width="18" height="18" viewBox="0 0 18 18"><path d="M4 1.5L12 0.5L16 5L15 13L8 16.5L1.5 13L1 5Z" fill="none" stroke="#ffffff" stroke-width="1.2" transform="translate(1 1)"/><path d="M4 1.5L12 0.5L16 5L15 13L8 16.5L1.5 13L1 5Z" fill="none" stroke="#808080" stroke-width="1.2"/></svg>
<svg class="a" style="left:773px;top:104px" width="18" height="18" viewBox="0 0 18 18"><path d="M4 1.5L12 0.5L16 5L15 13L8 16.5L1.5 13L1 5Z" fill="none" stroke="#ffffff" stroke-width="1.2" transform="translate(1 1)"/><path d="M4 1.5L12 0.5L16 5L15 13L8 16.5L1.5 13L1 5Z" fill="none" stroke="#808080" stroke-width="1.2"/></svg>
<svg class="a" style="left:797px;top:104px" width="18" height="18" viewBox="0 0 18 18"><path d="M4 1.5L12 0.5L16 5L15 13L8 16.5L1.5 13L1 5Z" fill="none" stroke="#ffffff" stroke-width="1.2" transform="translate(1 1)"/><path d="M4 1.5L12 0.5L16 5L15 13L8 16.5L1.5 13L1 5Z" fill="none" stroke="#808080" stroke-width="1.2"/></svg>
<svg class="a" style="left:827px;top:104px" width="18" height="18" viewBox="0 0 18 18"><path d="M2 4L8 1L15 4V13L8 16L2 13Z M8 6V16 M2 4L8 6L15 4 M5 7V13M6 9V12" fill="none" stroke="#ffffff" stroke-width="1" transform="translate(1 1)"/><path d="M2 4L8 1L15 4V13L8 16L2 13Z M8 6V16 M2 4L8 6L15 4 M5 7V13M6 9V12" fill="none" stroke="#808080" stroke-width="1"/></svg>
<svg class="a" style="left:851px;top:104px" width="20" height="18" viewBox="0 0 20 18"><path d="M1 13L8 6M3 6H8V11" fill="none" stroke="#ffffff" stroke-width="1.4" transform="translate(1 1)"/><path d="M1 13L8 6M3 6H8V11" fill="none" stroke="#808080" stroke-width="1.4"/><rect x="14" y="10" width="1.5" height="1.5" fill="#fff"/><rect x="17" y="10" width="1.5" height="1.5" fill="#fff"/></svg>
<svg class="a" style="left:883px;top:104px" width="17" height="18" viewBox="0 0 17 18"><path d="M4 12L8 16.5L15 8" fill="none" stroke="#183890" stroke-width="3"/><path d="M4 12L8 16.5L15 8" fill="none" stroke="#5080f0" stroke-width="1.6"/><path d="M0.5 0.5L0.5 9.5L2.7 7.5L4.5 11L6 10.2L4.3 6.8H7.5Z" fill="#fff" stroke="#000" stroke-width=".9"/></svg>
<svg class="a" style="left:911px;top:103px" width="20" height="20" viewBox="0 0 20 20"><path d="M9 1A8 8 0 1 0 9 17A8 8 0 1 0 9 1Z M3.5 13L14.5 4" fill="none" stroke="#ffffff" stroke-width="1.8" transform="translate(1 1)"/><path d="M9 1A8 8 0 1 0 9 17A8 8 0 1 0 9 1Z M3.5 13L14.5 4" fill="none" stroke="#808080" stroke-width="1.8"/></svg>
<svg class="a" style="left:933px;top:102px" width="23" height="23" viewBox="0 0 23 23"><path d="M11 1A10 10 0 1 0 11 21A10 10 0 1 0 11 1Z" fill="none" stroke="#ffffff" stroke-width="1.6" transform="translate(1 1)"/><path d="M11 1A10 10 0 1 0 11 21A10 10 0 1 0 11 1Z" fill="none" stroke="#808080" stroke-width="1.6"/></svg>
<svg class="a" style="left:967px;top:104px" width="16" height="19" viewBox="0 0 16 19"><path d="M3 5.5C3 0.8 13.5 0.5 13.5 5C13.5 8.5 8.5 8.5 8.5 12.5" fill="none" stroke="#202030" stroke-width="5.2"/><path d="M3 5.5C3 0.8 13.5 0.5 13.5 5C13.5 8.5 8.5 8.5 8.5 12.5" fill="none" stroke="#b8b8d0" stroke-width="2.8"/><path d="M4 4C5 2 8 2 9 2.5" fill="none" stroke="#f0f0ff" stroke-width="1"/><ellipse cx="8.5" cy="16.5" rx="2.8" ry="2" fill="#d8d8e8" stroke="#202030" stroke-width="1.2"/></svg>
<div class="a " style="left:187px;top:138px;font-size:11px;letter-spacing:-0.15px">Ribbon Bar</div>
<div class="a" style="left:1px;top:160px;width:252px;height:1px;background:#000"></div>
<div class="a" style="left:1px;top:160px;width:1px;height:555px;background:#000"></div>
<div class="a" style="left:1px;top:714px;width:252px;height:1px;background:#000"></div>
<div class="a" style="left:253px;top:159px;width:1px;height:558px;background:#fff"></div>
<div class="a" style="left:2px;top:181px;width:250px;height:534px;border-top:1px solid #fff;border-left:1px solid #fff;border-right:1px solid #000;border-bottom:1px solid #000;box-shadow:inset -1px -1px 0 #808080"></div>
<div class="a" style="left:65px;top:163px;width:40px;height:18px;background:#c0c0c0;border-top:1px solid #fff;border-left:1px solid #fff;border-right:1px solid #000;box-shadow:inset -1px 0 0 #808080;border-top-left-radius:2px"></div>
<div class="a " style="left:70px;top:167px;font-size:11px;letter-spacing:0px">Solids</div>
<div class="a" style="left:105px;top:163px;width:42px;height:18px;background:#c0c0c0;border-top:1px solid #fff;border-left:1px solid #fff;border-right:1px solid #000;box-shadow:inset -1px 0 0 #808080;border-top-left-radius:2px"></div>
<div class="a " style="left:110px;top:167px;font-size:11px;letter-spacing:0px">Art</div>
<div class="a" style="left:2px;top:161px;width:63px;height:22px;background:#c0c0c0;border-top:1px solid #fff;border-left:1px solid #fff;border-right:1px solid #000;border-top-left-radius:2px"></div>
<div class="a " style="left:11px;top:164px;font-size:11px;letter-spacing:0px">Toolpaths</div>
<div class="a" style="left:6px;top:183px;width:241px;height:1px;background:#808080"></div>
<div class="a" style="left:6px;top:184px;width:241px;height:1px;background:#fff"></div>
<div class="a" style="left:6px;top:213px;width:241px;height:1px;background:#808080"></div>
<div class="a" style="left:6px;top:214px;width:241px;height:1px;background:#fff"></div>
<svg class="a" style="left:15px;top:191px" width="16" height="16" viewBox="0 0 16 16"><path d="M1.5 8L5.5 14L13.5 1.5" stroke="#0a500a" stroke-width="4.6" fill="none" stroke-linejoin="round" stroke-linecap="round"/><path d="M1.5 8L5.5 14L13.5 1.5" stroke="#58d040" stroke-width="2.6" fill="none" stroke-linejoin="round" stroke-linecap="round"/><path d="M10.5 7.5L16 11.5L10.5 15.5Z" fill="#40b830" stroke="#0a500a" stroke-width=".9"/></svg>
<svg class="a" style="left:38px;top:191px" width="16" height="16" viewBox="0 0 16 16"><path d="M1.5 8L5.5 14L13.5 1.5" stroke="#0a500a" stroke-width="4.6" fill="none" stroke-linejoin="round" stroke-linecap="round"/><path d="M1.5 8L5.5 14L13.5 1.5" stroke="#58d040" stroke-width="2.6" fill="none" stroke-linejoin="round" stroke-linecap="round"/><path d="M9.5 10L15.5 15.5M15.5 10L9.5 15.5" stroke="#e03838" stroke-width="1.6"/></svg>
<svg class="a" style="left:67px;top:191px" width="16" height="16" viewBox="0 0 16 16"><rect x="0" y="0" width="10" height="5" rx="1" fill="#302050"/><rect x="2" y="1" width="6" height="3" fill="#b8a8e0"/><path d="M2.5 5H7V14C7 16 2.5 16 2.5 14Z" fill="#9090c0" stroke="#505080" stroke-width=".8"/><path d="M4 7V14" stroke="#d8d8f0" stroke-width="1"/><path d="M10 7.5L16 11.8L10 16Z" fill="#30b030" stroke="#107010" stroke-width=".8"/></svg>
<svg class="a" style="left:90px;top:191px" width="16" height="16" viewBox="0 0 16 16"><rect x="0" y="0" width="10" height="5" rx="1" fill="#302050"/><rect x="2" y="1" width="6" height="3" fill="#b8a8e0"/><path d="M2.5 5H7V14C7 16 2.5 16 2.5 14Z" fill="#9090c0" stroke="#505080" stroke-width=".8"/><path d="M4 7V14" stroke="#d8d8f0" stroke-width="1"/><path d="M8.5 9.5L15.5 16M15.5 9.5L8.5 16" stroke="#e03030" stroke-width="1.6"/></svg>
<svg class="a" style="left:119px;top:191px" width="16" height="16" viewBox="0 0 16 16"><rect x="0" y="0" width="15" height="16" fill="#000"/><path d="M0 3C4 0.5 6 5.5 10 3S13 1 15 2M0 8C4 5.5 6 10.5 10 8S13 6 15 7M0 13C4 10.5 6 15.5 10 13S13 11 15 12" stroke="#a8d8f0" stroke-width="1.6" fill="none"/></svg>
<svg class="a" style="left:142px;top:191px" width="16" height="16" viewBox="0 0 16 16"><path d="M0.5 7L4 2L9 0.5L14.5 3.5L14.5 10L11 15L5 15.5L0.5 13Z" fill="#6e70a8" stroke="#282850"/><path d="M0.5 7L4 2L9 0.5L14.5 3.5L9 7Z" fill="#b0b0e0" stroke="#282850" stroke-width=".8"/><path d="M9 7V15.5M9 7L14.5 3.5" stroke="#282850" stroke-width=".8" fill="none"/><path d="M9 7L14.5 3.5V10L11 15L9 15.5Z" fill="#5a5c90"/></svg>
<svg class="a" style="left:165px;top:191px" width="16" height="16" viewBox="0 0 16 16"><text x="-0.5" y="13.5" font-family="Liberation Serif" font-weight="bold" font-size="14" fill="#2a4aa8" letter-spacing="-0.5">G1</text></svg>
<svg class="a" style="left:188px;top:191px" width="16" height="16" viewBox="0 0 16 16"><rect x="0" y="0" width="10" height="5" fill="#300a30"/><rect x="2.5" y="1" width="5" height="3" fill="#e090e0"/><path d="M2 5H6.5V14C6.5 16 2 16 2 14Z" fill="#e8a8e0" stroke="#a04090" stroke-width=".8"/><path d="M8 7H11V4.5L15.5 8.5L11 12.5V10H8Z" fill="#f0d0e8" stroke="#a04090" stroke-width=".9"/></svg>
<svg class="a" style="left:217px;top:191px" width="16" height="16" viewBox="0 0 16 16"><path d="M4 13.5L12 6" stroke="#300000" stroke-width="5.5" stroke-linecap="round"/><path d="M4 13.5L12 6" stroke="#e02020" stroke-width="3.6" stroke-linecap="round"/><path d="M5 11.5L11 6.5" stroke="#f88080" stroke-width="1"/><path d="M1 2L5 6M5 2L1 6M3 1.5V6.5M0.5 4H5.5" stroke="#101010" stroke-width=".8"/><path d="M7 3C8 0 12 0 12.5 3" stroke="#101010" stroke-width=".8" fill="none"/></svg>
<div class="a" style="left:60px;top:190px;width:1px;height:18px;background:#808080"></div>
<div class="a" style="left:61px;top:190px;width:1px;height:18px;background:#fff"></div>
<div class="a" style="left:112px;top:190px;width:1px;height:18px;background:#808080"></div>
<div class="a" style="left:113px;top:190px;width:1px;height:18px;background:#fff"></div>
<div class="a" style="left:211px;top:190px;width:1px;height:18px;background:#808080"></div>
<div class="a" style="left:212px;top:190px;width:1px;height:18px;background:#fff"></div>
<div class="a" style="left:239px;top:190px;width:1px;height:18px;background:#808080"></div>
<div class="a" style="left:240px;top:190px;width:1px;height:18px;background:#fff"></div>
<svg class="a" style="left:15px;top:221px" width="16" height="16" viewBox="0 0 16 16"><path d="M4 7V4.5C4 0.8 12 0.8 12 4.5V7" fill="none" stroke="#705000" stroke-width="2.6"/><path d="M4 7V4.5C4 0.8 12 0.8 12 4.5V7" fill="none" stroke="#f0d040" stroke-width="1.2"/><rect x="1.5" y="6.5" width="13" height="9" rx="1" fill="#f0d030" stroke="#806000"/><path d="M3 8H6V14H3Z" fill="#fff080"/><circle cx="8" cy="10" r="1.6" fill="#000"/><path d="M7.2 10H8.8L9.2 13.5H6.8Z" fill="#000"/></svg>
<svg class="a" style="left:38px;top:221px" width="16" height="16" viewBox="0 0 16 16"><path d="M1 4C4 1.5 7 5.5 10 3.5S14 2 16 3M1 8.5C4 6 7 10 10 8S14 6.5 16 7.5M1 13C4 10.5 7 14.5 10 12.5S14 11 16 12" stroke="#1850b0" stroke-width="2.6" fill="none"/><path d="M1 4C4 1.5 7 5.5 10 3.5S14 2 16 3M1 8.5C4 6 7 10 10 8S14 6.5 16 7.5M1 13C4 10.5 7 14.5 10 12.5S14 11 16 12" stroke="#80c0f8" stroke-width="1" fill="none"/></svg>
<svg class="a" style="left:61px;top:221px" width="16" height="16" viewBox="0 0 16 16"><path d="M1 15.5V6C1 0.5 13.5 0.5 13.5 6V15.5L11.5 14L9.5 15.5L7.3 14L5 15.5L3 14Z" fill="#f4f4fc" stroke="#202030" stroke-width=".9"/><circle cx="4.5" cy="5.5" r="1" fill="#000"/><circle cx="9.5" cy="5.5" r="1" fill="#000"/><ellipse cx="7" cy="10" rx="1.4" ry="2" fill="#000"/></svg>
<svg class="a" style="left:89px;top:221px" width="16" height="16" viewBox="0 0 16 16"><path d="M1 3.5H17L9 13Z" fill="#e01010" stroke="#a00000" stroke-width=".6"/></svg>
<svg class="a" style="left:113px;top:221px" width="16" height="16" viewBox="0 0 16 16"><path d="M0.5 12H16L8.2 2.7Z" fill="#e01010" stroke="#a00000" stroke-width=".6"/></svg>
<svg class="a" style="left:136px;top:221px" width="16" height="16" viewBox="0 0 16 16"><path d="M0.5 0.5H16V3.5H3.5V9H10.5V10.5H2L0.5 10Z" fill="#e01818"/><path d="M0.5 0.5V10.5H10" fill="none" stroke="#e01818" stroke-width="3"/><path d="M10 4.5L16 10L10 14.5Z" fill="#e01818"/></svg>
<svg class="a" style="left:159px;top:221px" width="16" height="16" viewBox="0 0 16 16"><path d="M1.5 7L8 1L14.5 7Z M1.5 9L8 14.7L14.5 9Z" fill="#d81010"/><path d="M0.5 8H15.5" stroke="#f01818" stroke-width="2.2"/><path d="M1 8H15" stroke="#ffd0d0" stroke-width=".6"/></svg>
<svg class="a" style="left:188px;top:221px" width="16" height="16" viewBox="0 0 16 16"><path d="M1 2C4 0 6 4 9 2S13 0 15 2M1 6.5C4 4.5 6 8.5 9 6.5S13 4.5 15 6.5M1 11C4 9 6 13 9 11" stroke="#2860c8" stroke-width="1.3" fill="none"/><path d="M8.5 7V15.5L10.5 13.5L12.5 16.5L14 15.5L12 12.5H15Z" fill="#fff" stroke="#000" stroke-width=".8"/></svg>
<svg class="a" style="left:211px;top:221px" width="16" height="16" viewBox="0 0 16 16"><circle cx="6.3" cy="6.2" r="5.4" fill="none" stroke="#101010" stroke-width="1.1"/><rect x="6.5" y="6.5" width="9" height="9" fill="none" stroke="#e03050" stroke-width="1.1"/></svg>
<div class="a" style="left:83px;top:220px;width:1px;height:17px;background:#808080"></div>
<div class="a" style="left:84px;top:220px;width:1px;height:17px;background:#fff"></div>
<div class="a" style="left:182px;top:220px;width:1px;height:17px;background:#808080"></div>
<div class="a" style="left:183px;top:220px;width:1px;height:17px;background:#fff"></div>
<div class="a" style="left:7px;top:244px;width:239px;height:463px;background:#fff;border-top:1px solid #000;border-left:1px solid #000;border-right:1px solid #fff;border-bottom:1px solid #fff;box-shadow:inset -1px -1px 0 #c0c0c0"></div>
<div class="a" style="left:35px;top:259px;width:1px;height:26px;background-image:linear-gradient(#808080 50%,transparent 50%);background-size:1px 2px"></div>
<div class="a" style="left:20px;top:253px;width:6px;height:1px;background-image:linear-gradient(90deg,#808080 50%,transparent 50%);background-size:2px 1px"></div>
<div class="a" style="left:40px;top:269px;width:7px;height:1px;background-image:linear-gradient(90deg,#808080 50%,transparent 50%);background-size:2px 1px"></div>
<div class="a" style="left:40px;top:285px;width:7px;height:1px;background-image:linear-gradient(90deg,#808080 50%,transparent 50%);background-size:2px 1px"></div>
<div class="a" style="left:54px;top:291px;width:1px;height:90px;background-image:linear-gradient(#808080 50%,transparent 50%);background-size:1px 2px"></div>
<div class="a" style="left:58px;top:301px;width:6px;height:1px;background-image:linear-gradient(90deg,#808080 50%,transparent 50%);background-size:2px 1px"></div>
<div class="a" style="left:54px;top:380px;width:10px;height:1px;background-image:linear-gradient(90deg,#808080 50%,transparent 50%);background-size:2px 1px"></div>
<div class="a" style="left:73px;top:308px;width:1px;height:57px;background-image:linear-gradient(#808080 50%,transparent 50%);background-size:1px 2px"></div>
<div class="a" style="left:73px;top:317px;width:11px;height:1px;background-image:linear-gradient(90deg,#808080 50%,transparent 50%);background-size:2px 1px"></div>
<div class="a" style="left:73px;top:333px;width:11px;height:1px;background-image:linear-gradient(90deg,#808080 50%,transparent 50%);background-size:2px 1px"></div>
<div class="a" style="left:73px;top:349px;width:11px;height:1px;background-image:linear-gradient(90deg,#808080 50%,transparent 50%);background-size:2px 1px"></div>
<div class="a" style="left:73px;top:365px;width:11px;height:1px;background-image:linear-gradient(90deg,#808080 50%,transparent 50%);background-size:2px 1px"></div>
<div class="a" style="left:12px;top:249px;width:9px;height:9px;background:#fff;border:1px solid #808080"></div>
<div class="a" style="left:14px;top:253px;width:5px;height:1px;background:#000"></div>
<div class="a" style="left:31px;top:265px;width:9px;height:9px;background:#fff;border:1px solid #808080"></div>
<div class="a" style="left:33px;top:269px;width:5px;height:1px;background:#000"></div>
<div class="a" style="left:35px;top:267px;width:1px;height:5px;background:#000"></div>
<div class="a" style="left:31px;top:281px;width:9px;height:9px;background:#fff;border:1px solid #808080"></div>
<div class="a" style="left:33px;top:285px;width:5px;height:1px;background:#000"></div>
<div class="a" style="left:50px;top:297px;width:9px;height:9px;background:#fff;border:1px solid #808080"></div>
<div class="a" style="left:52px;top:301px;width:5px;height:1px;background:#000"></div>
<svg class="a" style="left:27px;top:245px" width="16" height="16" viewBox="0 0 16 16"><rect x="0.5" y="0.5" width="6.5" height="6.5" fill="#30d0f8" stroke="#0a2888"/><rect x="8.5" y="0.5" width="6.5" height="6.5" fill="#30d0f8" stroke="#0a2888"/><rect x="0.5" y="8.5" width="6.5" height="6.5" fill="#30d0f8" stroke="#0a2888"/><rect x="8.5" y="8.5" width="6.5" height="6.5" fill="#30d0f8" stroke="#0a2888"/></svg>
<svg class="a" style="left:47px;top:261px" width="16" height="16" viewBox="0 0 16 16"><path d="M0 14.5H15" stroke="#0a1aa0" stroke-width="2"/><path d="M2.5 7V14M7 2V14M11.5 7V14" stroke="#0a1aa0" stroke-width="2.2"/></svg>
<svg class="a" style="left:47px;top:277px" width="16" height="16" viewBox="0 0 16 16"><circle cx="4" cy="4" r="3.4" fill="#30d0f8" stroke="#0a50c0" stroke-width="1"/><circle cx="12" cy="4" r="3.4" fill="#30d0f8" stroke="#0a50c0" stroke-width="1"/><circle cx="4" cy="12" r="3.4" fill="#30d0f8" stroke="#0a50c0" stroke-width="1"/><circle cx="12" cy="12" r="3.4" fill="#30d0f8" stroke="#0a50c0" stroke-width="1"/></svg>
<svg class="a" style="left:65px;top:293px" width="16" height="16" viewBox="0 0 16 16"><path d="M0.5 3.5H5L6 2H10V13.5H0.5Z" fill="#686820" stroke="#202000" stroke-width=".8"/><path d="M3 6.5H15.5L12.5 13.5H0.5Z" fill="#e8e040" stroke="#202000" stroke-width=".8"/><path d="M3 12L6 7.5M6.5 12L9 8" stroke="#20a0c0" stroke-width="2"/><path d="M12 0.5L14 3" stroke="#000" stroke-width="1"/></svg>
<div class="a" style="left:85px;top:293px;width:160px;height:16px;background:#0a0a80"></div>
<div class="a " style="left:86px;top:295px;color:#fff;font-size:11px;letter-spacing:-0.2px">1 - Contour (2D) - [WCS: TOP] - [T</div>
<div class="a" style="left:84px;top:293px;width:161px;height:16px;border:1px dotted #fff"></div>
<svg class="a" style="left:84px;top:309px" width="16" height="16" viewBox="0 0 16 16"><path d="M0.5 2.5L2 0.5H6.5L8 2.5H15.5V14.5H0.5Z" fill="#c8c8c8" stroke="#202020" stroke-width="1"/><path d="M1 4H15" stroke="#f0f0f0" stroke-width="1"/><path d="M1.5 13.5H15" stroke="#808080" stroke-width="1"/></svg>
<svg class="a" style="left:84px;top:325px" width="16" height="16" viewBox="0 0 16 16"><path d="M4 1.5H12V10L8 14L4 10Z" fill="#141a70" stroke="#0a0a40" stroke-width=".6"/><path d="M5 7L10.5 2.5M5.5 11L11 6.5" stroke="#e0e8ff" stroke-width="1.1"/></svg>
<svg class="a" style="left:84px;top:341px" width="16" height="16" viewBox="0 0 16 16"><rect x="0.5" y="0.5" width="15" height="15" fill="#000" stroke="#104010"/><path d="M12.5 1.5V10C12.5 12.5 11 14 8 14H1.5" stroke="#80c860" stroke-width="1.5" fill="none"/><path d="M4.5 5L5.5 4L6.5 5L5.5 6Z" fill="#40d040" stroke="#40d040" stroke-width=".8"/></svg>
<svg class="a" style="left:84px;top:357px" width="16" height="16" viewBox="0 0 16 16"><rect x="0" y="0" width="15" height="15" fill="#000"/><path d="M0 3C4 0.5 6 5.5 10 3S13 1 15 2M0 8C4 5.5 6 10.5 10 8S13 6 15 7M0 13C4 10.5 6 15.5 10 13S13 11 15 12" stroke="#c0c8d0" stroke-width="1.5" fill="none"/></svg>
<svg class="a" style="left:65px;top:372px" width="16" height="16" viewBox="0 0 16 16"><path d="M0.5 0.5L15.5 8L0.5 15.5Z" fill="#e81010" stroke="#a00000" stroke-width=".6"/></svg>
<div class="a " style="left:49px;top:247px;font-size:11px;letter-spacing:-0.2px">Machine Group-1</div>
<div class="a " style="left:67px;top:263px;font-size:11px;letter-spacing:-0.2px">Properties - Generic Mill</div>
<div class="a " style="left:67px;top:279px;font-size:11px;letter-spacing:-0.2px">Toolpath Group-1</div>
<div class="a " style="left:105px;top:311px;font-size:11px;letter-spacing:-0.2px">Parameters</div>
<div class="a " style="left:105px;top:327px;font-size:11px;letter-spacing:-0.2px">#0 - M30.00 ENDMILL3 BUL</div>
<div class="a " style="left:105px;top:343px;font-size:11px;letter-spacing:-0.2px">Geometry - (1) chain(s)</div>
<div class="a " style="left:105px;top:359px;font-size:11px;letter-spacing:-0.2px">Toolpath - 4.9K - T.NC - Prog</div>
<div class="a" style="left:245px;top:245px;width:1px;height:461px;background:#fff"></div>
<div class="a" style="left:8px;top:689px;width:237px;height:16px;background-image:repeating-conic-gradient(#c0c0c0 0 25%,#fff 0 50%);background-size:2px 2px"></div>
<div class="a" style="left:8px;top:689px;width:16px;height:16px;background:#c0c0c0;border-top:1px solid #dfdfdf;border-left:1px solid #dfdfdf;border-right:1px solid #000;border-bottom:1px solid #000;box-shadow:inset 1px 1px 0 #fff,inset -1px -1px 0 #808080"></div>
<div class="a" style="left:24px;top:689px;width:161px;height:16px;background:#c0c0c0;border-top:1px solid #dfdfdf;border-left:1px solid #dfdfdf;border-right:1px solid #000;border-bottom:1px solid #000;box-shadow:inset 1px 1px 0 #fff,inset -1px -1px 0 #808080"></div>
<div class="a" style="left:229px;top:689px;width:16px;height:16px;background:#c0c0c0;border-top:1px solid #dfdfdf;border-left:1px solid #dfdfdf;border-right:1px solid #000;border-bottom:1px solid #000;box-shadow:inset 1px 1px 0 #fff,inset -1px -1px 0 #808080"></div>
<svg class="a" style="left:13px;top:693px" width="4" height="7"><path d="M4 0V7L0 3.5Z" fill="#000"/></svg>
<svg class="a" style="left:236px;top:693px" width="4" height="7"><path d="M0 0V7L4 3.5Z" fill="#000"/></svg>
<div class="a" style="left:258px;top:160px;width:735px;height:555px;background:#000"></div>
<svg class="a" style="left:296px;top:206px" width="40" height="20"><path d="M3.5 15V1.5" stroke="#2828d8" stroke-width="1.2"/><path d="M3.5 15L9 2" stroke="#30a030" stroke-width="1"/><path d="M3.5 15.5L22 19.5" stroke="#e02020" stroke-width="1.2"/></svg>
<div class="a " style="left:295px;top:192.6px;font-size:12px;line-height:12px;-webkit-text-stroke:0.3px currentColor;color:#2a2af0">Z</div>
<div class="a " style="left:303.5px;top:192.6px;font-size:12px;line-height:12px;-webkit-text-stroke:0.3px currentColor;color:#30b030">Y</div>
<div class="a " style="left:323.5px;top:219.7px;font-size:12px;line-height:12px;-webkit-text-stroke:0.3px currentColor;color:#f02828">X</div>
<div class="a " style="left:295px;top:226.5px;color:#f0f0f0;font-size:13px;line-height:12px;font-family:'Liberation Serif'">C</div>
<svg class="a" style="left:930px;top:206px" width="40" height="20"><path d="M3.5 15V1.5" stroke="#2828d8" stroke-width="1.2"/><path d="M3.5 15L9 2" stroke="#30a030" stroke-width="1"/><path d="M3.5 15.5L22 19.5" stroke="#e02020" stroke-width="1.2"/></svg>
<div class="a " style="left:929px;top:192.6px;font-size:12px;line-height:12px;-webkit-text-stroke:0.3px currentColor;color:#2a2af0">Z</div>
<div class="a " style="left:937.5px;top:192.6px;font-size:12px;line-height:12px;-webkit-text-stroke:0.3px currentColor;color:#30b030">Y</div>
<div class="a " style="left:957.5px;top:219.7px;font-size:12px;line-height:12px;-webkit-text-stroke:0.3px currentColor;color:#f02828">X</div>
<div class="a " style="left:929.2px;top:226.5px;color:#f0f0f0;font-size:12px;line-height:12px;font-weight:bold">T</div>
<svg class="a" style="left:296px;top:659px" width="40" height="20"><path d="M3.5 15V1.5" stroke="#2828d8" stroke-width="1.2"/><path d="M3.5 15L9 2" stroke="#30a030" stroke-width="1"/><path d="M3.5 15.5L22 19.5" stroke="#e02020" stroke-width="1.2"/></svg>
<div class="a " style="left:295px;top:645.6px;font-size:12px;line-height:12px;-webkit-text-stroke:0.3px currentColor;color:#2a2af0">Z</div>
<div class="a " style="left:303.5px;top:645.6px;font-size:12px;line-height:12px;-webkit-text-stroke:0.3px currentColor;color:#30b030">Y</div>
<div class="a " style="left:323.5px;top:672.7px;font-size:12px;line-height:12px;-webkit-text-stroke:0.3px currentColor;color:#f02828">X</div>
<svg class="a" style="left:258px;top:160px" width="735" height="555" viewBox="258 160 735 555">
<g fill="none" stroke-width="1" shape-rendering="crispEdges">
<path d="M422.5 278V344M379.5 381V448" stroke="#f0f060"/>
<path d="M422.5 344V363L505 381.5A74 54 0 0 1 472 484L379.5 466V448" stroke="#60e0f0"/>
<ellipse cx="647.5" cy="468" rx="108" ry="79" stroke="#60e0f0"/>
<ellipse cx="647" cy="468" rx="71" ry="51.5" stroke="#40d040"/>
<path d="M647.5 467V454M647.5 465L653 454M647.5 467L666 471.5" stroke="#40e040" stroke-width="1"/>
</g></svg>
<div class="a " style="left:643.5px;top:439.4px;color:#40e040;font-size:12px;line-height:12px;letter-spacing:1px;-webkit-text-stroke:0.4px #40e040">ZY</div>
<div class="a " style="left:671.8px;top:466.3px;color:#40e040;font-size:12px;line-height:12px;-webkit-text-stroke:0.4px #40e040">X</div>
<div class="a " style="left:265px;top:694px;color:#d8d8d8;font-size:12px;font-weight:bold;letter-spacing:-0.35px">Gview:Not Saved</div>
<div class="a " style="left:369px;top:694px;color:#d8d8d8;font-size:12px;font-weight:bold;letter-spacing:-0.35px">WCS:TOP</div>
<div class="a " style="left:434px;top:694px;color:#d8d8d8;font-size:12px;font-weight:bold;letter-spacing:-0.35px">T/Cplane:TOP</div>
<div class="a" style="left:873px;top:679px;width:1px;height:24px;background:#f0f040"></div>
<div class="a" style="left:969px;top:679px;width:1px;height:24px;background:#f0f040"></div>
<div class="a" style="left:873px;top:690px;width:97px;height:1px;background:#f0f040"></div>
<div class="a " style="left:891px;top:673px;color:#30e030;font-size:12px;font-weight:bold">38.73334</div>
<div class="a " style="left:896.5px;top:692px;color:#d8d8d8;font-size:12px;font-weight:bold">Metric</div>
<div class="a" style="left:994px;top:160px;width:28px;height:236px;border-top:1px solid #fff;border-left:1px solid #fff;border-bottom:1px solid #808080"></div>
<div class="a" style="left:997px;top:163px;width:24px;height:3px;border-top:1px solid #fff;border-left:1px solid #fff;border-right:1px solid #808080;border-bottom:1px solid #808080"></div>
<svg class="a" style="left:1001px;top:175px" width="16" height="16" viewBox="0 0 16 16"><path d="M2 1L13 13" stroke="#202020" stroke-width="1.2"/><path d="M14 1L8 7" stroke="#202020" stroke-width="1.2"/><path d="M8 0V9M1 15L8 8L15 15" stroke="#a07020" stroke-width="2.6" fill="none"/><path d="M8 9V16" stroke="#101010" stroke-width="1.4"/><rect x="3" y="14" width="1.5" height="1.5" fill="#202020"/><rect x="5.5" y="14" width="1.5" height="1.5" fill="#202020"/></svg>
<svg class="a" style="left:1001px;top:197px" width="16" height="16" viewBox="0 0 16 16"><defs><linearGradient id="grt2" x1="0" y1="0" x2="0" y2="1"><stop offset="0" stop-color="#90d0f8"/><stop offset="1" stop-color="#2070d0"/></linearGradient></defs><rect x="0.5" y="0.5" width="15" height="14" rx="1.5" fill="#2868b0" stroke="#184880"/><rect x="2" y="2" width="12" height="7" fill="url(#grt2)"/><rect x="2" y="9" width="12" height="4.5" fill="#f8f8f8"/><rect x="2" y="10" width="5" height="3" rx="1.2" fill="#40b040"/><circle cx="11.5" cy="11.5" r="2.3" fill="#e02020"/></svg>
<svg class="a" style="left:1001px;top:219px" width="16" height="16" viewBox="0 0 16 16"><rect x="0.5" y="0.5" width="15" height="14" fill="#c8c8e8" stroke="#202050"/><path d="M2 2H14V12H2Z" fill="#ffffff"/><path d="M3 3H13V5H8L11 8V11H4L7 8L3 5Z" fill="#4050a0"/><path d="M1 13H15" stroke="#505080" stroke-width="2"/></svg>
<svg class="a" style="left:1001px;top:241px" width="16" height="16" viewBox="0 0 16 16"><rect x="0.5" y="0.5" width="15" height="14.5" fill="none" stroke="#101040" stroke-width="1.3" stroke-dasharray="1.2 1.2"/><path d="M5 10L1.5 14" stroke="#906000" stroke-width="3.2" stroke-linecap="round"/><path d="M5 10L1.5 14" stroke="#f8c020" stroke-width="1.8" stroke-linecap="round"/><circle cx="9" cy="6" r="5.5" fill="#b8e4f8" stroke="#101040" stroke-width="1.1"/></svg>
<svg class="a" style="left:1001px;top:264px" width="16" height="16" viewBox="0 0 16 16"><path d="M1.5 14V1.5H14" fill="none" stroke="#3040a0" stroke-width="1.6"/><path d="M0 12L1.5 15L3 12Z" fill="#3040a0"/><path d="M12 0L15 1.5L12 3Z" fill="#3040a0"/><defs><linearGradient id="grt5" x1="0" y1="0" x2="0" y2="1"><stop offset="0" stop-color="#c8c8f0"/><stop offset="1" stop-color="#7070b8"/></linearGradient></defs><rect x="6.5" y="5.5" width="9" height="9" fill="url(#grt5)" stroke="#505090" stroke-width=".8"/></svg>
<svg class="a" style="left:1001px;top:285px" width="16" height="16" viewBox="0 0 16 16"><circle cx="8" cy="8.5" r="7.3" fill="none" stroke="#106030" stroke-width="1.2"/><path d="M4 12L7 9M5.5 9L8.5 12M9.5 6L12.5 3M11 3L14 6" stroke="#f04000" stroke-width="2.2"/></svg>
<div class="a" style="left:994px;top:396px;width:28px;height:319px;border-top:1px solid #fff;border-left:1px solid #fff"></div>
<div class="a" style="left:0px;top:715px;width:1022px;height:1px;background:#c0c0c0"></div>
<div class="a" style="left:0px;top:716px;width:1022px;height:1px;background:#fff"></div>
<div class="a" style="left:129px;top:719px;width:29px;height:18px;border-top:1px solid #808080;border-left:1px solid #808080;border-right:1px solid #fff"></div>
<div class="a mono" style="left:129px;top:722px;width:29px;text-align:center">3D</div>
<div class="a" style="left:160px;top:719px;width:60px;height:18px;border-top:1px solid #808080;border-left:1px solid #808080;border-right:1px solid #fff"></div>
<div class="a mono" style="left:160px;top:722px;width:60px;text-align:center">Gview</div>
<div class="a" style="left:222px;top:719px;width:41px;height:18px;border-top:1px solid #808080;border-left:1px solid #808080;border-right:1px solid #fff"></div>
<div class="a mono" style="left:222px;top:722px;width:41px;text-align:center">Planes</div>
<div class="a" style="left:266px;top:719px;width:130px;height:18px;border-top:1px solid #808080;border-left:1px solid #808080;border-right:1px solid #fff"></div>
<div class="a mono" style="left:278px;top:722px;">Z</div>
<div class="a" style="left:284px;top:719px;width:113px;height:18px;background:#fff;border-top:1px solid #808080;border-left:1px solid #808080;border-right:1px solid #fff;box-shadow:inset 1px 1px 0 #000,inset -1px 0 0 #000"></div>
<div class="a" style="left:380px;top:721px;width:15px;height:16px;background:#c0c0c0;border-top:1px solid #fff;border-left:1px solid #fff;box-shadow:inset -1px 0 0 #808080"></div>
<svg class="a" style="left:384px;top:727px" width="7" height="4"><path d="M0 0H7L3.5 4Z" fill="#000"/></svg>
<div class="a" style="left:286px;top:721px;width:19px;height:14px;background:#0a0a80"></div>
<div class="a mono" style="left:287px;top:722px;color:#fff">0.0</div>
<div class="a" style="left:398px;top:719px;width:75px;height:18px;border-top:1px solid #808080;border-left:1px solid #808080;border-right:1px solid #fff"></div>
<div class="a" style="left:399px;top:719px;width:73px;height:18px;background:#c0c0c0;border-top:1px solid #808080;border-left:1px solid #808080;border-right:1px solid #fff;box-shadow:inset 1px 1px 0 #000,inset -1px 0 0 #000"></div>
<div class="a" style="left:455px;top:721px;width:15px;height:16px;background:#c0c0c0;border-top:1px solid #fff;border-left:1px solid #fff;box-shadow:inset -1px 0 0 #808080"></div>
<svg class="a" style="left:459px;top:727px" width="7" height="4"><path d="M0 0H7L3.5 4Z" fill="#000"/></svg>
<div class="a" style="left:401px;top:721px;width:56px;height:16px;background:#00f000"></div>
<div class="a mono" style="left:400px;top:722px;width:57px;text-align:center">10</div>
<div class="a" style="left:472px;top:719px;width:192px;height:18px;border-top:1px solid #808080;border-left:1px solid #808080;border-right:1px solid #fff"></div>
<div class="a mono" style="left:486px;top:722px;">Level</div>
<div class="a" style="left:512px;top:719px;width:152px;height:18px;background:#fff;border-top:1px solid #808080;border-left:1px solid #808080;border-right:1px solid #fff;box-shadow:inset 1px 1px 0 #000,inset -1px 0 0 #000"></div>
<div class="a" style="left:647px;top:721px;width:15px;height:16px;background:#c0c0c0;border-top:1px solid #fff;border-left:1px solid #fff;box-shadow:inset -1px 0 0 #808080"></div>
<svg class="a" style="left:651px;top:727px" width="7" height="4"><path d="M0 0H7L3.5 4Z" fill="#000"/></svg>
<div class="a mono" style="left:515px;top:722px;">1</div>
<div class="a" style="left:666px;top:719px;width:80px;height:18px;border-top:1px solid #808080;border-left:1px solid #808080;border-right:1px solid #fff"></div>
<div class="a mono" style="left:666px;top:722px;width:80px;text-align:center">Attributes</div>
<div class="a" style="left:746px;top:719px;width:38px;height:18px;border-top:1px solid #808080;border-left:1px solid #808080;border-right:1px solid #fff"></div>
<div class="a" style="left:748px;top:719px;width:35px;height:18px;background:#fff;border-top:1px solid #808080;border-left:1px solid #808080;border-right:1px solid #fff;box-shadow:inset 1px 1px 0 #000,inset -1px 0 0 #000"></div>
<div class="a" style="left:766px;top:721px;width:15px;height:16px;background:#c0c0c0;border-top:1px solid #fff;border-left:1px solid #fff;box-shadow:inset -1px 0 0 #808080"></div>
<svg class="a" style="left:770px;top:727px" width="7" height="4"><path d="M0 0H7L3.5 4Z" fill="#000"/></svg>
<div class="a " style="left:751px;top:727px;font-size:22px;line-height:22px;font-family:'Liberation Mono'">*</div>
<div class="a" style="left:784px;top:719px;width:68px;height:18px;border-top:1px solid #808080;border-left:1px solid #808080;border-right:1px solid #fff"></div>
<div class="a" style="left:786px;top:719px;width:64px;height:18px;background:#fff;border-top:1px solid #808080;border-left:1px solid #808080;border-right:1px solid #fff;box-shadow:inset 1px 1px 0 #000,inset -1px 0 0 #000"></div>
<div class="a" style="left:833px;top:721px;width:15px;height:16px;background:#c0c0c0;border-top:1px solid #fff;border-left:1px solid #fff;box-shadow:inset -1px 0 0 #808080"></div>
<svg class="a" style="left:837px;top:727px" width="7" height="4"><path d="M0 0H7L3.5 4Z" fill="#000"/></svg>
<div class="a" style="left:790px;top:729px;width:42px;height:3px;background:#000"></div>
<div class="a" style="left:853px;top:719px;width:66px;height:18px;border-top:1px solid #808080;border-left:1px solid #808080;border-right:1px solid #fff"></div>
<div class="a" style="left:855px;top:719px;width:63px;height:18px;background:#fff;border-top:1px solid #808080;border-left:1px solid #808080;border-right:1px solid #fff;box-shadow:inset 1px 1px 0 #000,inset -1px 0 0 #000"></div>
<div class="a" style="left:901px;top:721px;width:15px;height:16px;background:#c0c0c0;border-top:1px solid #fff;border-left:1px solid #fff;box-shadow:inset -1px 0 0 #808080"></div>
<svg class="a" style="left:905px;top:727px" width="7" height="4"><path d="M0 0H7L3.5 4Z" fill="#000"/></svg>
<div class="a" style="left:858px;top:731px;width:42px;height:1px;background:#000"></div>
<div class="a" style="left:922px;top:719px;width:48px;height:18px;border-top:1px solid #808080;border-left:1px solid #808080;border-right:1px solid #fff"></div>
<div class="a mono" style="left:922px;top:722px;width:48px;text-align:center">WCS</div>
<div class="a" style="left:972px;top:719px;width:52px;height:18px;border-top:1px solid #808080;border-left:1px solid #808080;border-right:1px solid #fff"></div>
<div class="a mono" style="left:972px;top:722px;width:52px;text-align:center">Groups</div>
</body></html>
